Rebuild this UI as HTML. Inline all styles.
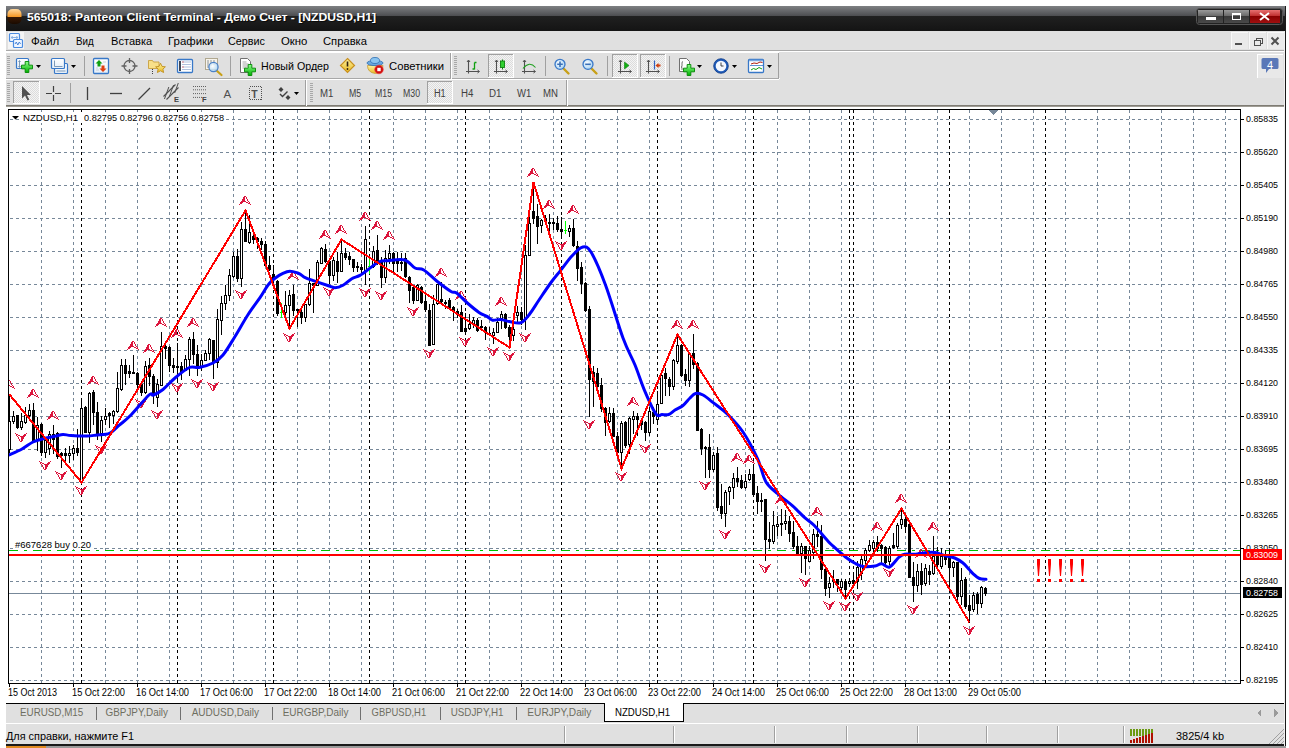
<!DOCTYPE html>
<html><head><meta charset="utf-8"><style>
html,body{margin:0;padding:0;background:#fff;}
body{width:1289px;height:748px;overflow:hidden;position:relative;font-family:"Liberation Sans",sans-serif;}
svg{position:absolute;left:0;top:0;-webkit-font-smoothing:antialiased;}
</style></head><body>
<svg width="1289" height="748" viewBox="0 0 1289 748" shape-rendering="crispEdges">
<defs>
<pattern id="chk" width="2" height="2" patternUnits="userSpaceOnUse"><rect width="2" height="2" fill="#F4F4F4"/><rect width="1" height="1" fill="#DCDCDC"/><rect x="1" y="1" width="1" height="1" fill="#DCDCDC"/></pattern>
<linearGradient id="tg" x1="0" y1="0" x2="0" y2="1"><stop offset="0" stop-color="#7E8083"/><stop offset="0.4" stop-color="#4C4D50"/><stop offset="0.42" stop-color="#202020"/><stop offset="1" stop-color="#141414"/></linearGradient>
<linearGradient id="bg1" x1="0" y1="0" x2="0" y2="1"><stop offset="0" stop-color="#9A9A9A"/><stop offset="0.45" stop-color="#6A6A6A"/><stop offset="0.5" stop-color="#3A3A3A"/><stop offset="1" stop-color="#4A4A4A"/></linearGradient>
<linearGradient id="bg2" x1="0" y1="0" x2="0" y2="1"><stop offset="0" stop-color="#E87070"/><stop offset="0.45" stop-color="#C03030"/><stop offset="0.5" stop-color="#8A0000"/><stop offset="1" stop-color="#A01010"/></linearGradient>
<linearGradient id="ico" x1="0" y1="0" x2="0" y2="1"><stop offset="0" stop-color="#FFD9A0"/><stop offset="0.5" stop-color="#F59A2A"/><stop offset="0.52" stop-color="#3A1A05"/><stop offset="1" stop-color="#1A0A00"/></linearGradient>
<linearGradient id="tbl" x1="0" y1="0" x2="0" y2="1"><stop offset="0" stop-color="#6E6B63"/><stop offset="1" stop-color="#B0ADA5"/></linearGradient>
</defs><rect x="6" y="6" width="1280" height="25" fill="url(#tg)" /><rect x="7.5" y="9" width="14" height="15" rx="5" fill="url(#ico)" shape-rendering="geometricPrecision"/><text x="27" y="21" textLength="349" lengthAdjust="spacingAndGlyphs" style="font-family:'Liberation Sans', sans-serif;font-size:11.5px;font-weight:bold;" fill="#000" transform="translate(1,1)" opacity="0.6">565018: Panteon Client Terminal - Демо Счет - [NZDUSD,H1]</text><text x="27" y="21" textLength="349" lengthAdjust="spacingAndGlyphs" style="font-family:'Liberation Sans', sans-serif;font-size:11.5px;font-weight:bold;" fill="#FFFFFF" >565018: Panteon Client Terminal - Демо Счет - [NZDUSD,H1]</text><rect x="1196.5" y="8.5" width="86" height="16" rx="3" fill="#222" stroke="#555" stroke-width="1" shape-rendering="geometricPrecision"/><rect x="1198" y="10" width="25" height="13" fill="url(#bg1)" /><rect x="1224" y="10" width="25" height="13" fill="url(#bg1)" /><rect x="1250" y="10" width="30" height="13" fill="url(#bg2)" /><rect x="1206" y="17" width="10" height="3" fill="#FFF" /><rect x="1232.5" y="13.5" width="8" height="6" fill="none" stroke="#FFF" stroke-width="1.2"/><rect x="1232" y="13" width="9" height="2" fill="#FFF" /><path d="M1260 13l9 7M1269 13l-9 7" stroke="#FFF" stroke-width="2" shape-rendering="geometricPrecision"/><rect x="6" y="31" width="1280" height="19" fill="#E0E0E0" /><rect x="6" y="50" width="1280" height="1" fill="#A8A8A8" /><rect x="6" y="51" width="1280" height="1" fill="#FFFFFF" /><rect x="8" y="32" width="16" height="17" fill="#F4F4F4" /><rect x="9.5" y="33.5" width="10" height="8" rx="1" fill="#F0F6FF" stroke="#4A8BE0" stroke-width="1.2" shape-rendering="geometricPrecision"/><path d="M11.5 37.5h6M12.5 36l-1 1.5 1 1.5M16.5 36l1 1.5-1 1.5" stroke="#6A9AD8" stroke-width="0.8" fill="none" shape-rendering="geometricPrecision"/><rect x="13.5" y="39.5" width="9" height="8" rx="1" fill="#F0F6FF" stroke="#4A8BE0" stroke-width="1.2" shape-rendering="geometricPrecision"/><path d="M15 44l1.3-2 1.5 3 1.5-3 1.3 2" stroke="#3A7BD5" stroke-width="0.9" fill="none" shape-rendering="geometricPrecision"/><text x="31" y="45" textLength="28.3" lengthAdjust="spacingAndGlyphs" style="font-family:'Liberation Sans', sans-serif;font-size:11px;" fill="#000" >Файл</text><text x="76" y="45" textLength="17.7" lengthAdjust="spacingAndGlyphs" style="font-family:'Liberation Sans', sans-serif;font-size:11px;" fill="#000" >Вид</text><text x="111" y="45" textLength="41.2" lengthAdjust="spacingAndGlyphs" style="font-family:'Liberation Sans', sans-serif;font-size:11px;" fill="#000" >Вставка</text><text x="168" y="45" textLength="45.5" lengthAdjust="spacingAndGlyphs" style="font-family:'Liberation Sans', sans-serif;font-size:11px;" fill="#000" >Графики</text><text x="228" y="45" textLength="37" lengthAdjust="spacingAndGlyphs" style="font-family:'Liberation Sans', sans-serif;font-size:11px;" fill="#000" >Сервис</text><text x="281" y="45" textLength="26.4" lengthAdjust="spacingAndGlyphs" style="font-family:'Liberation Sans', sans-serif;font-size:11px;" fill="#000" >Окно</text><text x="323" y="45" textLength="44" lengthAdjust="spacingAndGlyphs" style="font-family:'Liberation Sans', sans-serif;font-size:11px;" fill="#000" >Справка</text><rect x="1231" y="32" width="17" height="17" fill="#EAEAEA" /><rect x="1231" y="32" width="17" height="1" fill="#F8F8F8" /><rect x="1231" y="32" width="1" height="17" fill="#F8F8F8" /><rect x="1249" y="32" width="17" height="17" fill="#EAEAEA" /><rect x="1249" y="32" width="17" height="1" fill="#F8F8F8" /><rect x="1249" y="32" width="1" height="17" fill="#F8F8F8" /><rect x="1267" y="32" width="17" height="17" fill="#EAEAEA" /><rect x="1267" y="32" width="17" height="1" fill="#F8F8F8" /><rect x="1267" y="32" width="1" height="17" fill="#F8F8F8" /><rect x="1235" y="43" width="7" height="2" fill="#505050" /><path d="M1254.5 40.5h6v5h-6zM1256.5 40.5v-2h6v5h-2" fill="none" stroke="#505050" stroke-width="1"/><path d="M1271.5 37.5l7 7M1278.5 37.5l-7 7" stroke="#505050" stroke-width="2" shape-rendering="geometricPrecision"/><rect x="6" y="52" width="1280" height="53" fill="#E0E0E0" /><rect x="6" y="105" width="1280" height="2" fill="url(#tbl)" /><rect x="6" y="78" width="773" height="1" fill="#A8A8A8" /><rect x="6" y="79" width="773" height="1" fill="#FFFFFF" /><rect x="6" y="52" width="773" height="1" fill="#FFFFFF" /><rect x="450" y="53" width="1" height="25" fill="#A0A0A0" /><rect x="451" y="53" width="1" height="26" fill="#FFFFFF" /><rect x="778" y="53" width="1" height="25" fill="#A0A0A0" /><rect x="779" y="53" width="1" height="26" fill="#FFFFFF" /><rect x="779" y="52" width="507" height="26" fill="#E0E0E0" /><rect x="7" y="56" width="3" height="1" fill="#A8A8A8" /><rect x="7" y="58" width="3" height="1" fill="#A8A8A8" /><rect x="7" y="60" width="3" height="1" fill="#A8A8A8" /><rect x="7" y="62" width="3" height="1" fill="#A8A8A8" /><rect x="7" y="64" width="3" height="1" fill="#A8A8A8" /><rect x="7" y="66" width="3" height="1" fill="#A8A8A8" /><rect x="7" y="68" width="3" height="1" fill="#A8A8A8" /><rect x="7" y="70" width="3" height="1" fill="#A8A8A8" /><rect x="7" y="72" width="3" height="1" fill="#A8A8A8" /><rect x="7" y="74" width="3" height="1" fill="#A8A8A8" /><rect x="454" y="56" width="3" height="1" fill="#A8A8A8" /><rect x="454" y="58" width="3" height="1" fill="#A8A8A8" /><rect x="454" y="60" width="3" height="1" fill="#A8A8A8" /><rect x="454" y="62" width="3" height="1" fill="#A8A8A8" /><rect x="454" y="64" width="3" height="1" fill="#A8A8A8" /><rect x="454" y="66" width="3" height="1" fill="#A8A8A8" /><rect x="454" y="68" width="3" height="1" fill="#A8A8A8" /><rect x="454" y="70" width="3" height="1" fill="#A8A8A8" /><rect x="454" y="72" width="3" height="1" fill="#A8A8A8" /><rect x="454" y="74" width="3" height="1" fill="#A8A8A8" /><rect x="305" y="80" width="1" height="25" fill="#A0A0A0" /><rect x="306" y="80" width="1" height="26" fill="#FFFFFF" /><rect x="566" y="80" width="1" height="25" fill="#A0A0A0" /><rect x="567" y="80" width="1" height="26" fill="#FFFFFF" /><rect x="7" y="83" width="3" height="1" fill="#A8A8A8" /><rect x="7" y="85" width="3" height="1" fill="#A8A8A8" /><rect x="7" y="87" width="3" height="1" fill="#A8A8A8" /><rect x="7" y="89" width="3" height="1" fill="#A8A8A8" /><rect x="7" y="91" width="3" height="1" fill="#A8A8A8" /><rect x="7" y="93" width="3" height="1" fill="#A8A8A8" /><rect x="7" y="95" width="3" height="1" fill="#A8A8A8" /><rect x="7" y="97" width="3" height="1" fill="#A8A8A8" /><rect x="7" y="99" width="3" height="1" fill="#A8A8A8" /><rect x="7" y="101" width="3" height="1" fill="#A8A8A8" /><rect x="310" y="83" width="3" height="1" fill="#A8A8A8" /><rect x="310" y="85" width="3" height="1" fill="#A8A8A8" /><rect x="310" y="87" width="3" height="1" fill="#A8A8A8" /><rect x="310" y="89" width="3" height="1" fill="#A8A8A8" /><rect x="310" y="91" width="3" height="1" fill="#A8A8A8" /><rect x="310" y="93" width="3" height="1" fill="#A8A8A8" /><rect x="310" y="95" width="3" height="1" fill="#A8A8A8" /><rect x="310" y="97" width="3" height="1" fill="#A8A8A8" /><rect x="310" y="99" width="3" height="1" fill="#A8A8A8" /><rect x="310" y="101" width="3" height="1" fill="#A8A8A8" /><rect x="84" y="56" width="1" height="20" fill="#A0A0A0" /><rect x="230" y="56" width="1" height="20" fill="#A0A0A0" /><rect x="545" y="56" width="1" height="20" fill="#A0A0A0" /><rect x="607" y="56" width="1" height="20" fill="#A0A0A0" /><rect x="669" y="56" width="1" height="20" fill="#A0A0A0" /><rect x="70" y="83" width="1" height="20" fill="#A0A0A0" /><rect x="13" y="81" width="27" height="23" fill="url(#chk)" /><rect x="13" y="81" width="27" height="1" fill="#A0A0A0" /><rect x="13" y="81" width="1" height="23" fill="#A0A0A0" /><rect x="13" y="103" width="27" height="1" fill="#FFFFFF" /><rect x="39" y="81" width="1" height="23" fill="#FFFFFF" /><rect x="427" y="81" width="26" height="23" fill="url(#chk)" /><rect x="427" y="81" width="26" height="1" fill="#A0A0A0" /><rect x="427" y="81" width="1" height="23" fill="#A0A0A0" /><rect x="427" y="103" width="26" height="1" fill="#FFFFFF" /><rect x="452" y="81" width="1" height="23" fill="#FFFFFF" /><rect x="488" y="54" width="26" height="24" fill="url(#chk)" /><rect x="488" y="54" width="26" height="1" fill="#A0A0A0" /><rect x="488" y="54" width="1" height="24" fill="#A0A0A0" /><rect x="488" y="77" width="26" height="1" fill="#FFFFFF" /><rect x="513" y="54" width="1" height="24" fill="#FFFFFF" /><rect x="612" y="54" width="26" height="24" fill="url(#chk)" /><rect x="612" y="54" width="26" height="1" fill="#A0A0A0" /><rect x="612" y="54" width="1" height="24" fill="#A0A0A0" /><rect x="612" y="77" width="26" height="1" fill="#FFFFFF" /><rect x="637" y="54" width="1" height="24" fill="#FFFFFF" /><rect x="640" y="54" width="26" height="24" fill="url(#chk)" /><rect x="640" y="54" width="26" height="1" fill="#A0A0A0" /><rect x="640" y="54" width="1" height="24" fill="#A0A0A0" /><rect x="640" y="77" width="26" height="1" fill="#FFFFFF" /><rect x="665" y="54" width="1" height="24" fill="#FFFFFF" /><text x="261" y="70" textLength="68" lengthAdjust="spacingAndGlyphs" style="font-family:'Liberation Sans', sans-serif;font-size:11px;" fill="#000" >Новый Ордер</text><text x="389" y="70" textLength="55" lengthAdjust="spacingAndGlyphs" style="font-family:'Liberation Sans', sans-serif;font-size:11px;" fill="#000" >Советники</text><text x="320" y="97" textLength="13.4" lengthAdjust="spacingAndGlyphs" style="font-family:'Liberation Sans', sans-serif;font-size:10px;" fill="#404040" >M1</text><text x="349" y="97" textLength="12.2" lengthAdjust="spacingAndGlyphs" style="font-family:'Liberation Sans', sans-serif;font-size:10px;" fill="#404040" >M5</text><text x="375" y="97" textLength="17" lengthAdjust="spacingAndGlyphs" style="font-family:'Liberation Sans', sans-serif;font-size:10px;" fill="#404040" >M15</text><text x="403" y="97" textLength="17" lengthAdjust="spacingAndGlyphs" style="font-family:'Liberation Sans', sans-serif;font-size:10px;" fill="#404040" >M30</text><text x="434" y="97" textLength="11.7" lengthAdjust="spacingAndGlyphs" style="font-family:'Liberation Sans', sans-serif;font-size:10px;" fill="#404040" >H1</text><text x="461" y="97" textLength="12.4" lengthAdjust="spacingAndGlyphs" style="font-family:'Liberation Sans', sans-serif;font-size:10px;" fill="#404040" >H4</text><text x="489" y="97" textLength="12.5" lengthAdjust="spacingAndGlyphs" style="font-family:'Liberation Sans', sans-serif;font-size:10px;" fill="#404040" >D1</text><text x="517" y="97" textLength="14.3" lengthAdjust="spacingAndGlyphs" style="font-family:'Liberation Sans', sans-serif;font-size:10px;" fill="#404040" >W1</text><text x="543" y="97" textLength="15" lengthAdjust="spacingAndGlyphs" style="font-family:'Liberation Sans', sans-serif;font-size:10px;" fill="#404040" >MN</text><rect x="1257" y="54" width="26" height="24" fill="#E8E8E8" /><rect x="1257" y="54" width="26" height="1" fill="#FFFFFF" /><rect x="1257" y="54" width="1" height="24" fill="#FFFFFF" /><path d="M1263 58h14q1.5 0 1.5 1.5v8q0 1.5-1.5 1.5h-8l-3 4v-4h-3q-1.5 0-1.5-1.5v-8q0-1.5 1.5-1.5z" fill="#5A78B8" shape-rendering="geometricPrecision"/><text x="1270" y="69" style="font-family:'Liberation Sans', sans-serif;font-size:11px;" fill="#FFFFFF" text-anchor="middle">4</text><rect x="6" y="703" width="1280" height="1" fill="#000000" /><rect x="6" y="704" width="1280" height="19" fill="#E0E0E0" /><rect x="6" y="723" width="1280" height="1" fill="#FFFFFF" /><text x="20" y="716" textLength="63.3" lengthAdjust="spacingAndGlyphs" style="font-family:'Liberation Sans', sans-serif;font-size:11px;" fill="#6E6E60" >EURUSD,M15</text><text x="105.5" y="716" textLength="62.5" lengthAdjust="spacingAndGlyphs" style="font-family:'Liberation Sans', sans-serif;font-size:11px;" fill="#6E6E60" >GBPJPY,Daily</text><text x="191.7" y="716" textLength="67.3" lengthAdjust="spacingAndGlyphs" style="font-family:'Liberation Sans', sans-serif;font-size:11px;" fill="#6E6E60" >AUDUSD,Daily</text><text x="282.7" y="716" textLength="65.7" lengthAdjust="spacingAndGlyphs" style="font-family:'Liberation Sans', sans-serif;font-size:11px;" fill="#6E6E60" >EURGBP,Daily</text><text x="371.6" y="716" textLength="54.6" lengthAdjust="spacingAndGlyphs" style="font-family:'Liberation Sans', sans-serif;font-size:11px;" fill="#6E6E60" >GBPUSD,H1</text><text x="450.7" y="716" textLength="52.8" lengthAdjust="spacingAndGlyphs" style="font-family:'Liberation Sans', sans-serif;font-size:11px;" fill="#6E6E60" >USDJPY,H1</text><text x="527.3" y="716" textLength="64.1" lengthAdjust="spacingAndGlyphs" style="font-family:'Liberation Sans', sans-serif;font-size:11px;" fill="#6E6E60" >EURJPY,Daily</text><rect x="96" y="707" width="1" height="13" fill="#707070" /><rect x="180" y="707" width="1" height="13" fill="#707070" /><rect x="272" y="707" width="1" height="13" fill="#707070" /><rect x="360" y="707" width="1" height="13" fill="#707070" /><rect x="440" y="707" width="1" height="13" fill="#707070" /><rect x="516" y="707" width="1" height="13" fill="#707070" /><rect x="604" y="703" width="80" height="19" fill="#FFFFFF" /><rect x="604" y="703" width="1" height="19" fill="#000" /><rect x="683" y="703" width="1" height="19" fill="#000" /><rect x="604" y="721" width="80" height="1" fill="#000" /><text x="615" y="716" textLength="55.2" lengthAdjust="spacingAndGlyphs" style="font-family:'Liberation Sans', sans-serif;font-size:11px;" fill="#000" >NZDUSD,H1</text><path d="M1261 709v8l-4-4z" fill="#9A9A9A"/><path d="M1274 709v8l4-4z" fill="#9A9A9A"/><rect x="6" y="724" width="1280" height="20" fill="#E0E0E0" /><rect x="6" y="744" width="1280" height="2" fill="#1A1A1A" /><rect x="6" y="746" width="40" height="2" fill="#E08A20" /><rect x="46" y="746" width="1240" height="2" fill="#9A9A9A" /><text x="6" y="740" textLength="128" lengthAdjust="spacingAndGlyphs" style="font-family:'Liberation Sans', sans-serif;font-size:11px;" fill="#000" >Для справки, нажмите F1</text><rect x="564" y="726" width="1" height="17" fill="#A0A0A0" /><rect x="565" y="726" width="1" height="17" fill="#FFFFFF" /><rect x="673" y="726" width="1" height="17" fill="#A0A0A0" /><rect x="674" y="726" width="1" height="17" fill="#FFFFFF" /><rect x="774" y="726" width="1" height="17" fill="#A0A0A0" /><rect x="775" y="726" width="1" height="17" fill="#FFFFFF" /><rect x="846" y="726" width="1" height="17" fill="#A0A0A0" /><rect x="847" y="726" width="1" height="17" fill="#FFFFFF" /><rect x="917" y="726" width="1" height="17" fill="#A0A0A0" /><rect x="918" y="726" width="1" height="17" fill="#FFFFFF" /><rect x="986" y="726" width="1" height="17" fill="#A0A0A0" /><rect x="987" y="726" width="1" height="17" fill="#FFFFFF" /><rect x="1057" y="726" width="1" height="17" fill="#A0A0A0" /><rect x="1058" y="726" width="1" height="17" fill="#FFFFFF" /><rect x="1123" y="726" width="1" height="17" fill="#A0A0A0" /><rect x="1124" y="726" width="1" height="17" fill="#FFFFFF" /><rect x="1130" y="729" width="2" height="7" fill="#6A9A10" /><rect x="1130" y="740" width="2" height="3" fill="#B01000" /><rect x="1133" y="729" width="2" height="7" fill="#6A9A10" /><rect x="1133" y="739" width="2" height="4" fill="#B01000" /><rect x="1136" y="729" width="2" height="7" fill="#6A9A10" /><rect x="1136" y="738" width="2" height="5" fill="#B01000" /><rect x="1139" y="729" width="2" height="7" fill="#6A9A10" /><rect x="1139" y="737" width="2" height="6" fill="#B01000" /><rect x="1142" y="729" width="2" height="7" fill="#6A9A10" /><rect x="1142" y="736" width="2" height="7" fill="#B01000" /><rect x="1145" y="729" width="2" height="7" fill="#6A9A10" /><rect x="1145" y="735" width="2" height="8" fill="#B01000" /><rect x="1148" y="729" width="2" height="7" fill="#6A9A10" /><rect x="1148" y="734" width="2" height="9" fill="#B01000" /><rect x="1151" y="729" width="2" height="7" fill="#6A9A10" /><rect x="1151" y="733" width="2" height="10" fill="#B01000" /><text x="1176" y="740" textLength="48" lengthAdjust="spacingAndGlyphs" style="font-family:'Liberation Sans', sans-serif;font-size:11px;" fill="#000" >3825/4 kb</text><path d="M1284 729L1269 744M1284 733L1273 744M1284 737L1277 744M1284 741L1281 744" stroke="#A0A0A0" stroke-width="1" shape-rendering="geometricPrecision"/><rect x="1284" y="31" width="1" height="715" fill="#F0F0F0" /><rect x="1285" y="6" width="1" height="740" fill="#1A1A1A" />
<g shape-rendering="geometricPrecision"><defs>
<linearGradient id="gp" x1="0" y1="0" x2="0" y2="1"><stop offset="0" stop-color="#8CFF8C"/><stop offset="1" stop-color="#00B000"/></linearGradient>
<linearGradient id="gw" x1="0" y1="0" x2="0" y2="1"><stop offset="0" stop-color="#FFFFFF"/><stop offset="1" stop-color="#E4EEF8"/></linearGradient>
<radialGradient id="gmag" cx="0.4" cy="0.4" r="0.6"><stop offset="0" stop-color="#FFFFFF"/><stop offset="1" stop-color="#A8D4F4"/></radialGradient>
<linearGradient id="gy" x1="0" y1="0" x2="0" y2="1"><stop offset="0" stop-color="#FFF3A0"/><stop offset="1" stop-color="#E8B820"/></linearGradient>
</defs><rect x="16.5" y="58.5" width="12" height="10" rx="1" fill="url(#gw)" stroke="#3878C8" stroke-width="1.2"/><path d="M19.5 61v6M18.5 62l1-1.5 1 1.5M18.5 66l1 1.5 1-1.5" stroke="#7090B0" stroke-width="0.9" fill="none"/><path d="M25.166666666666668 61.5h3.6666666666666665v3.6666666666666665h3.6666666666666665v3.6666666666666665h-3.6666666666666665v3.6666666666666665h-3.6666666666666665v-3.6666666666666665h-3.6666666666666665v-3.6666666666666665h3.6666666666666665z" fill="url(#gp)" stroke="#008800" stroke-width="0.9"/><path d="M36 65h5l-2.5 3z" fill="#000"/><rect x="54.5" y="63.5" width="13" height="10" rx="1" fill="url(#gw)" stroke="#3878C8" stroke-width="1.2"/><rect x="51.5" y="58.5" width="13" height="10" rx="1" fill="url(#gw)" stroke="#3878C8" stroke-width="1.2"/><path d="M54.5 60.5v6h8M56.5 71h9" stroke="#7090B0" stroke-width="0.9" fill="none"/><path d="M71 65h5l-2.5 3z" fill="#000"/><rect x="93.5" y="58.5" width="15" height="15" rx="1" fill="url(#gw)" stroke="#3878C8" stroke-width="1.3"/><path d="M99 60l-3.5 3.5h2v3h3v-3h2z" fill="#10A010"/><path d="M103 72l3.5-3.5h-2v-3h-3v3h-2z" fill="#E04010"/><path d="M103 62h3M96 70h3M96 68h2" stroke="#C0C8D0" stroke-width="0.8"/><circle cx="129.5" cy="66" r="5.5" fill="none" stroke="#606060" stroke-width="1.3"/><path d="M129.5 58v5M129.5 69v5M121.5 66h5M132.5 66h5" stroke="#606060" stroke-width="1.3"/><path d="M148.5 60.5h4l1 1.5h5.5v6.5h-10.5z" fill="#F8E08A" stroke="#C8A040" stroke-width="0.9"/><path d="M160.5 63.2l1.5 3.2 3.4.4-2.5 2.3.7 3.4-3.1-1.7-3.1 1.7.7-3.4-2.5-2.3 3.4-.4z" fill="url(#gy)" stroke="#C09020" stroke-width="0.9"/><path d="M152.5 69v5" stroke="#404040" stroke-width="1" stroke-dasharray="1 1"/><rect x="177.5" y="59.5" width="15" height="13" rx="1" fill="#fff" stroke="#3878C8" stroke-width="1.3"/><path d="M180 61v10" stroke="#404858" stroke-width="2"/><path d="M182 62h9M182 64.5h9M182 67h9M182 69.5h9" stroke="#90A8D0" stroke-width="0.7"/><path d="M182.5 62h1M182.5 67h1" stroke="#E02020" stroke-width="1"/><rect x="205.5" y="58.5" width="12" height="11" fill="#F8F4EC" stroke="#B0A890" stroke-width="1"/><path d="M208 60v8M211 60v6M214 60v5" stroke="#808890" stroke-width="0.9"/><path d="M216.5 70.5l5 4.5" stroke="#C8A018" stroke-width="2.2" stroke-linecap="round"/><circle cx="213.5" cy="67" r="4.6" fill="url(#gmag)" fill-opacity="0.85" stroke="#4A80C8" stroke-width="1.2"/><path d="M240.5 58.5h7l3 3v11h-10z" fill="#fff" stroke="#707070" stroke-width="1"/><path d="M242.5 62h4M242.5 64h6M242.5 66h6M242.5 68h4" stroke="#909090" stroke-width="0.8"/><path d="M248.16666666666666 64.5h3.6666666666666665v3.6666666666666665h3.6666666666666665v3.6666666666666665h-3.6666666666666665v3.6666666666666665h-3.6666666666666665v-3.6666666666666665h-3.6666666666666665v-3.6666666666666665h3.6666666666666665z" fill="url(#gp)" stroke="#008800" stroke-width="0.9"/><path d="M347.5 58.5l7 7-7 7-7-7z" fill="url(#gy)" stroke="#C89020" stroke-width="1.2"/><path d="M347.5 61.5v5" stroke="#302010" stroke-width="1.6"/><circle cx="347.5" cy="69" r="0.9" fill="#302010"/><path d="M367.5 65.5q0 7 8 8q7-1 7.5-8z" fill="url(#gy)" stroke="#C8A040" stroke-width="0.9"/><ellipse cx="375" cy="63" rx="8" ry="2.6" fill="#6AA8E0" stroke="#3A78B8" stroke-width="0.9"/><ellipse cx="375" cy="60.5" rx="4.5" ry="3" fill="#8AC4F0" stroke="#3A78B8" stroke-width="0.9"/><circle cx="379" cy="69.5" r="4.3" fill="#D01010" stroke="#F04040" stroke-width="0.6"/><rect x="377.3" y="67.8" width="3.4" height="3.4" fill="#fff"/><path d="M468.5 60.5v13M466.0 71.5h13" stroke="#505050" stroke-width="1.1" fill="none"/><path d="M467.0 62.0l1.5-2 1.5 2M477.5 70.0l2 1.5-2 1.5" stroke="#505050" stroke-width="1" fill="none"/><path d="M472.5 69h2M474.5 69.5v-7M474.5 62.5h2" stroke="#10A010" stroke-width="1.3" fill="none"/><path d="M496.5 60.5v13M494.0 71.5h13" stroke="#505050" stroke-width="1.1" fill="none"/><path d="M495.0 62.0l1.5-2 1.5 2M505.5 70.0l2 1.5-2 1.5" stroke="#505050" stroke-width="1" fill="none"/><path d="M502.5 59.5v10" stroke="#108010" stroke-width="1"/><rect x="500.5" y="61" width="4" height="6.5" fill="#30D030" stroke="#108010" stroke-width="0.9"/><path d="M524.5 60.5v13M522.0 71.5h13" stroke="#505050" stroke-width="1.1" fill="none"/><path d="M523.0 62.0l1.5-2 1.5 2M533.5 70.0l2 1.5-2 1.5" stroke="#505050" stroke-width="1" fill="none"/><path d="M523 68.5q6.5-8 12.5-1" stroke="#20A020" stroke-width="1.1" fill="none"/><path d="M563.5 68.5l5 5" stroke="#C8A018" stroke-width="2.4" stroke-linecap="round"/><circle cx="560" cy="64.3" r="5" fill="url(#gmag)" stroke="#3A78C8" stroke-width="1.3"/><path d="M557.2 64.3h5.6M560 61.5v5.6" stroke="#3A70B8" stroke-width="1.6"/><path d="M591.5 68.5l5 5" stroke="#C8A018" stroke-width="2.4" stroke-linecap="round"/><circle cx="588" cy="64.3" r="5" fill="url(#gmag)" stroke="#3A78C8" stroke-width="1.3"/><path d="M585.2 64.3h5.6" stroke="#3A70B8" stroke-width="1.6"/><path d="M620.5 60.5v13M618.0 71.5h13" stroke="#505050" stroke-width="1.1" fill="none"/><path d="M619.0 62.0l1.5-2 1.5 2M629.5 70.0l2 1.5-2 1.5" stroke="#505050" stroke-width="1" fill="none"/><path d="M624.5 62v7l4.5-3.5z" fill="#10B010" stroke="#108010" stroke-width="0.6"/><path d="M648.5 60.5v13M646.0 71.5h13" stroke="#505050" stroke-width="1.1" fill="none"/><path d="M647.0 62.0l1.5-2 1.5 2M657.5 70.0l2 1.5-2 1.5" stroke="#505050" stroke-width="1" fill="none"/><path d="M654.5 60.5v9" stroke="#3060C0" stroke-width="1.2"/><path d="M655.5 65.5l3-2.5v1.5h2v2h-2v1.5z" fill="#D04010"/><path d="M679.5 58.5h7l3 3v10h-10z" fill="#fff" stroke="#707070" stroke-width="1"/><path d="M683 61.5q-1 0-1 1.5v3q0 1-1 1 1 0 1 1v2" stroke="#505050" stroke-width="0.8" fill="none"/><path d="M687.1666666666666 64.5h3.6666666666666665v3.6666666666666665h3.6666666666666665v3.6666666666666665h-3.6666666666666665v3.6666666666666665h-3.6666666666666665v-3.6666666666666665h-3.6666666666666665v-3.6666666666666665h3.6666666666666665z" fill="url(#gp)" stroke="#008800" stroke-width="0.9"/><path d="M697 65h5l-2.5 3z" fill="#000"/><circle cx="721" cy="66" r="7.3" fill="#1E5AB8" stroke="#0C3A88" stroke-width="0.8"/><circle cx="721" cy="66" r="5.3" fill="#F4F8FF"/><path d="M721 62.5v3.5h2.5" stroke="#303030" stroke-width="0.9" fill="none"/><path d="M732 65h5l-2.5 3z" fill="#000"/><rect x="748.5" y="59.5" width="15" height="13" rx="1" fill="#fff" stroke="#3878C8" stroke-width="1.3"/><path d="M749 60.5h14" stroke="#7AA8E0" stroke-width="1.5"/><path d="M750 65.5h14" stroke="#3878C8" stroke-width="0.8"/><path d="M751 64l3-1 3 .5 3-1.5 2.5.5" stroke="#B02010" stroke-width="1" fill="none"/><path d="M751 70l2.5-1.5 2.5 1 3-2 3 1.5" stroke="#10A010" stroke-width="1" fill="none"/><path d="M767 65h5l-2.5 3z" fill="#000"/><path d="M22 86v12.5l3-3 2.5 5 1.8-.9-2.4-4.6h4z" fill="#505050"/><path d="M53.5 86v6M53.5 95v6M46 93.5h6M55 93.5h6" stroke="#404040" stroke-width="1.2"/><path d="M87.5 87v13" stroke="#404040" stroke-width="1.3"/><path d="M110 93.5h12" stroke="#404040" stroke-width="1.3"/><path d="M138.5 99.5l11.5-11.5" stroke="#404040" stroke-width="1.2"/><path d="M163.5 96.5l12-12M166.5 99.5l12-12" stroke="#505050" stroke-width="1.1" fill="none"/><path d="M167.5 87v12M171.5 85v11M175.5 83v10" stroke="#505050" stroke-width="1" fill="none" transform="skewX(-20) translate(33 0)"/><text x="174" y="102" style="font-family:'Liberation Sans',sans-serif;font-size:7.5px;font-weight:bold" fill="#404040">E</text><path d="M193 86.5h13M193 89.8h13M193 93.6h13M193 97.4h9" stroke="#606060" stroke-width="1" stroke-dasharray="1 1"/><text x="202" y="102" style="font-family:'Liberation Sans',sans-serif;font-size:7.5px;font-weight:bold" fill="#404040">F</text><text x="223.5" y="97.5" style="font-family:'Liberation Sans',sans-serif;font-size:11.5px" fill="#505050">A</text><rect x="249.5" y="86.5" width="12" height="13" fill="none" stroke="#505050" stroke-width="1" stroke-dasharray="1 1" shape-rendering="crispEdges"/><text x="251.3" y="97.5" style="font-family:'Liberation Sans',sans-serif;font-size:10.5px;font-weight:bold" fill="#505050">T</text><path d="M281 87l2.5 2.5-2.5 2.5-2.5-2.5zM288 95l2.5 2.5-2.5 2.5-2.5-2.5z" fill="#404040"/><path d="M280 94l2.5 2.5 5-5" stroke="#404040" stroke-width="1.4" fill="none"/><path d="M294 92h5l-2.5 3z" fill="#000"/></g>
<rect x="6" y="107" width="1278" height="596" fill="#fff"/>
<defs><clipPath id="cc"><rect x="9" y="110" width="1231" height="573"/></clipPath></defs><g clip-path="url(#cc)"><path d="M10 119.5H1240M10 152.5H1240M10 185.5H1240M10 218.5H1240M10 251.5H1240M10 284.5H1240M10 317.5H1240M10 350.5H1240M10 383.5H1240M10 416.5H1240M10 449.5H1240M10 482.5H1240M10 515.5H1240M10 548.5H1240M10 581.5H1240M10 614.5H1240M10 647.5H1240M10 680.5H1240" stroke="#778899" stroke-width="1" stroke-dasharray="3 3" fill="none"/><path d="M41.5 110V683M73.5 110V683M105.5 110V683M137.5 110V683M169.5 110V683M201.5 110V683M233.5 110V683M265.5 110V683M297.5 110V683M329.5 110V683M361.5 110V683M393.5 110V683M425.5 110V683M457.5 110V683M489.5 110V683M521.5 110V683M553.5 110V683M585.5 110V683M617.5 110V683M649.5 110V683M681.5 110V683M713.5 110V683M745.5 110V683M777.5 110V683M809.5 110V683M841.5 110V683M873.5 110V683M905.5 110V683M937.5 110V683M969.5 110V683M1001.5 110V683M1033.5 110V683M1065.5 110V683M1097.5 110V683M1129.5 110V683M1161.5 110V683M1193.5 110V683M1225.5 110V683" stroke="#778899" stroke-width="1" stroke-dasharray="3 3" fill="none"/><path d="M81.5 110V683M177.5 110V683M273.5 110V683M369.5 110V683M465.5 110V683M561.5 110V683M657.5 110V683M753.5 110V683M849.5 110V683M853.5 110V683M949.5 110V683M1045.5 110V683" stroke="#000" stroke-width="1" stroke-dasharray="3 3" fill="none"/><path d="M9 593.5H1240" stroke="#778899" stroke-width="1"/><path d="M9 550.5H1240" stroke="#00C000" stroke-width="1" stroke-dasharray="9 6 3 6"/><path d="M9 394h1v59h-1zM8 421h3v29h-3zM13 411h1v13h-1zM12 416h3v6h-3zM17 415h1v14h-1zM16 415h3v13h-3zM21 413h1v17h-1zM20 421h3v7h-3zM25 407h1v17h-1zM24 415h3v8h-3zM29 404h1v13h-1zM28 410h3v6h-3zM33 403h1v38h-1zM32 410h3v31h-3zM37 417h1v34h-1zM36 425h3v15h-3zM41 423h1v33h-1zM40 424h3v29h-3zM45 439h1v19h-1zM44 440h3v13h-3zM49 431h1v24h-1zM48 434h3v15h-3zM53 425h1v29h-1zM52 434h3v6h-3zM57 432h1v27h-1zM56 433h3v24h-3zM61 452h1v16h-1zM60 453h3v3h-3zM65 448h1v16h-1zM64 453h3v3h-3zM69 446h1v17h-1zM68 453h3v3h-3zM73 445h1v15h-1zM72 448h3v6h-3zM77 429h1v27h-1zM76 448h3v5h-3zM81 401h1v82h-1zM80 408h3v74h-3zM85 406h1v27h-1zM84 407h3v26h-3zM89 392h1v51h-1zM88 393h3v40h-3zM93 390h1v35h-1zM92 392h3v21h-3zM97 402h1v38h-1zM96 412h3v23h-3zM101 416h1v26h-1zM100 420h3v14h-3zM105 408h1v17h-1zM104 416h3v4h-3zM109 412h1v16h-1zM108 413h3v3h-3zM113 410h1v14h-1zM112 411h3v5h-3zM117 372h1v41h-1zM116 388h3v24h-3zM121 359h1v32h-1zM120 365h3v25h-3zM125 359h1v26h-1zM124 365h3v9h-3zM129 365h1v13h-1zM128 371h3v3h-3zM133 355h1v19h-1zM132 372h3v2h-3zM137 372h1v17h-1zM136 373h3v12h-3zM141 382h1v14h-1zM140 384h3v9h-3zM145 361h1v33h-1zM144 366h3v27h-3zM149 358h1v28h-1zM148 365h3v12h-3zM153 374h1v30h-1zM152 376h3v18h-3zM157 379h1v28h-1zM156 384h3v14h-3zM161 332h1v54h-1zM160 346h3v40h-3zM165 344h1v15h-1zM164 346h3v3h-3zM169 346h1v26h-1zM168 347h3v19h-3zM173 358h1v15h-1zM172 365h3v3h-3zM177 343h1v37h-1zM176 366h3v2h-3zM181 362h1v18h-1zM180 366h3v6h-3zM185 355h1v16h-1zM184 359h3v12h-3zM189 337h1v39h-1zM188 339h3v21h-3zM193 332h1v32h-1zM192 339h3v16h-3zM197 345h1v31h-1zM196 354h3v15h-3zM201 354h1v17h-1zM200 360h3v8h-3zM205 350h1v11h-1zM204 353h3v8h-3zM209 338h1v22h-1zM208 339h3v15h-3zM213 340h1v39h-1zM212 340h3v22h-3zM217 309h1v59h-1zM216 319h3v44h-3zM221 296h1v39h-1zM220 303h3v18h-3zM225 285h1v25h-1zM224 295h3v9h-3zM229 269h1v32h-1zM228 275h3v21h-3zM233 252h1v26h-1zM232 256h3v21h-3zM237 249h1v33h-1zM236 256h3v23h-3zM241 222h1v65h-1zM240 229h3v50h-3zM245 210h1v32h-1zM244 229h3v13h-3zM249 215h1v29h-1zM248 232h3v11h-3zM253 233h1v11h-1zM252 236h3v4h-3zM257 237h1v12h-1zM256 238h3v4h-3zM261 238h1v12h-1zM260 241h3v4h-3zM265 241h1v26h-1zM264 244h3v22h-3zM269 256h1v15h-1zM268 265h3v5h-3zM273 265h1v18h-1zM272 274h3v5h-3zM277 280h1v36h-1zM276 281h3v33h-3zM285 291h1v25h-1zM284 305h3v8h-3zM289 290h1v40h-1zM288 295h3v11h-3zM293 285h1v31h-1zM292 294h3v17h-3zM297 309h1v18h-1zM296 309h3v2h-3zM301 309h1v15h-1zM300 312h3v6h-3zM305 304h1v18h-1zM304 304h3v14h-3zM309 269h1v37h-1zM308 283h3v22h-3zM313 283h1v30h-1zM312 283h3v3h-3zM317 260h1v26h-1zM316 262h3v24h-3zM321 247h1v17h-1zM320 248h3v16h-3zM325 244h1v19h-1zM324 249h3v13h-3zM329 260h1v24h-1zM328 261h3v15h-3zM333 257h1v24h-1zM332 260h3v16h-3zM337 252h1v31h-1zM336 261h3v11h-3zM341 239h1v33h-1zM340 253h3v19h-3zM345 248h1v12h-1zM344 253h3v5h-3zM349 252h1v13h-1zM348 256h3v4h-3zM353 259h1v13h-1zM352 259h3v9h-3zM357 262h1v10h-1zM356 266h3v2h-3zM361 264h1v9h-1zM360 267h3v3h-3zM365 226h1v59h-1zM364 239h3v32h-3zM373 246h1v22h-1zM372 251h3v16h-3zM377 235h1v30h-1zM376 250h3v12h-3zM381 257h1v31h-1zM380 261h3v17h-3zM385 250h1v33h-1zM384 258h3v20h-3zM389 245h1v19h-1zM388 253h3v6h-3zM393 252h1v20h-1zM392 253h3v11h-3zM397 252h1v20h-1zM396 261h3v3h-3zM401 253h1v18h-1zM400 262h3v2h-3zM405 253h1v25h-1zM404 258h3v19h-3zM409 276h1v27h-1zM408 277h3v14h-3zM413 285h1v19h-1zM412 287h3v14h-3zM417 284h1v17h-1zM416 285h3v16h-3zM421 286h1v18h-1zM420 287h3v16h-3zM425 295h1v17h-1zM424 301h3v9h-3zM429 304h1v42h-1zM428 310h3v36h-3zM433 295h1v50h-1zM432 304h3v41h-3zM437 284h1v21h-1zM436 284h3v20h-3zM441 282h1v21h-1zM440 299h3v3h-3zM445 300h1v9h-1zM444 302h3v2h-3zM449 298h1v11h-1zM448 300h3v8h-3zM453 306h1v15h-1zM452 307h3v5h-3zM457 309h1v9h-1zM456 311h3v3h-3zM461 305h1v27h-1zM460 312h3v20h-3zM465 313h1v21h-1zM464 328h3v4h-3zM469 314h1v16h-1zM468 324h3v5h-3zM473 317h1v11h-1zM472 320h3v4h-3zM477 318h1v14h-1zM476 320h3v11h-3zM481 320h1v9h-1zM480 326h3v2h-3zM485 326h1v14h-1zM484 327h3v6h-3zM489 327h1v9h-1zM488 333h3v2h-3zM493 328h1v16h-1zM492 332h3v4h-3zM497 318h1v15h-1zM496 322h3v11h-3zM501 311h1v18h-1zM500 314h3v5h-3zM505 313h1v16h-1zM504 314h3v14h-3zM509 325h1v24h-1zM508 327h3v10h-3zM513 315h1v26h-1zM512 329h3v7h-3zM517 306h1v18h-1zM516 312h3v4h-3zM521 307h1v18h-1zM520 312h3v8h-3zM525 245h1v85h-1zM524 255h3v65h-3zM529 211h1v45h-1zM528 223h3v33h-3zM533 182h1v42h-1zM532 211h3v8h-3zM537 204h1v40h-1zM536 216h3v11h-3zM541 219h1v14h-1zM540 220h3v6h-3zM545 215h1v7h-1zM544 218h3v3h-3zM549 214h1v18h-1zM548 222h3v2h-3zM553 218h1v12h-1zM552 222h3v2h-3zM557 216h1v16h-1zM556 223h3v7h-3zM561 217h1v21h-1zM560 229h3v3h-3zM569 225h1v12h-1zM568 228h3v4h-3zM573 219h1v28h-1zM572 228h3v18h-3zM577 241h1v40h-1zM576 246h3v23h-3zM581 262h1v32h-1zM580 267h3v17h-3zM585 282h1v30h-1zM584 283h3v28h-3zM589 306h1v111h-1zM588 309h3v71h-3zM593 366h1v41h-1zM592 372h3v10h-3zM597 368h1v19h-1zM596 373h3v14h-3zM601 378h1v34h-1zM600 385h3v24h-3zM605 407h1v29h-1zM604 408h3v15h-3zM609 407h1v16h-1zM608 413h3v9h-3zM613 408h1v29h-1zM612 413h3v24h-3zM617 432h1v21h-1zM616 436h3v17h-3zM621 421h1v48h-1zM620 423h3v30h-3zM625 421h1v27h-1zM624 422h3v24h-3zM629 417h1v37h-1zM628 418h3v27h-3zM633 411h1v23h-1zM632 416h3v4h-3zM637 413h1v23h-1zM636 416h3v4h-3zM641 419h1v11h-1zM640 421h3v4h-3zM645 421h1v20h-1zM644 422h3v11h-3zM649 407h1v29h-1zM648 411h3v22h-3zM653 407h1v17h-1zM652 412h3v5h-3zM657 391h1v33h-1zM656 404h3v16h-3zM661 374h1v30h-1zM660 375h3v29h-3zM665 368h1v28h-1zM664 373h3v6h-3zM669 377h1v19h-1zM668 379h3v8h-3zM673 359h1v31h-1zM672 360h3v27h-3zM677 334h1v30h-1zM676 345h3v17h-3zM681 344h1v33h-1zM680 345h3v31h-3zM685 369h1v17h-1zM684 374h3v7h-3zM689 353h1v34h-1zM688 353h3v28h-3zM693 334h1v35h-1zM692 353h3v12h-3zM697 362h1v69h-1zM696 363h3v68h-3zM701 428h1v27h-1zM700 429h3v20h-3zM705 446h1v32h-1zM704 447h3v2h-3zM709 434h1v44h-1zM708 447h3v23h-3zM713 452h1v20h-1zM712 455h3v15h-3zM717 447h1v64h-1zM716 453h3v55h-3zM721 484h1v35h-1zM720 506h3v8h-3zM725 490h1v37h-1zM724 492h3v22h-3zM729 486h1v19h-1zM728 487h3v5h-3zM733 473h1v26h-1zM732 478h3v10h-3zM737 467h1v20h-1zM736 478h3v4h-3zM741 475h1v14h-1zM740 480h3v8h-3zM745 474h1v15h-1zM744 481h3v7h-3zM749 469h1v12h-1zM748 474h3v6h-3zM753 465h1v30h-1zM752 474h3v21h-3zM757 486h1v28h-1zM756 493h3v9h-3zM761 493h1v19h-1zM760 500h3v2h-3zM765 499h1v62h-1zM764 499h3v41h-3zM769 522h1v27h-1zM768 539h3v3h-3zM773 511h1v33h-1zM772 525h3v17h-3zM777 516h1v20h-1zM776 524h3v3h-3zM781 509h1v27h-1zM780 523h3v2h-3zM785 510h1v20h-1zM784 521h3v3h-3zM789 516h1v26h-1zM788 521h3v13h-3zM793 521h1v28h-1zM792 532h3v15h-3zM797 536h1v19h-1zM796 546h3v9h-3zM801 543h1v30h-1zM800 546h3v8h-3zM805 546h1v29h-1zM804 546h3v13h-3zM809 546h1v16h-1zM808 550h3v12h-3zM813 529h1v30h-1zM812 534h3v19h-3zM817 521h1v26h-1zM816 534h3v3h-3zM821 525h1v54h-1zM820 536h3v34h-3zM825 568h1v28h-1zM824 569h3v20h-3zM829 577h1v21h-1zM828 583h3v5h-3zM833 570h1v18h-1zM832 579h3v3h-3zM837 579h1v13h-1zM836 579h3v6h-3zM841 579h1v13h-1zM840 581h3v7h-3zM845 579h1v20h-1zM844 581h3v9h-3zM849 579h1v6h-1zM848 581h3v3h-3zM853 575h1v13h-1zM852 580h3v4h-3zM857 561h1v28h-1zM856 567h3v15h-3zM861 556h1v24h-1zM860 559h3v15h-3zM865 548h1v18h-1zM864 550h3v11h-3zM869 540h1v12h-1zM868 545h3v6h-3zM873 540h1v13h-1zM872 542h3v7h-3zM877 536h1v16h-1zM876 542h3v7h-3zM881 544h1v21h-1zM880 545h3v4h-3zM885 546h1v19h-1zM884 547h3v16h-3zM889 546h1v19h-1zM888 548h3v14h-3zM893 533h1v16h-1zM892 545h3v3h-3zM897 523h1v26h-1zM896 525h3v22h-3zM901 508h1v21h-1zM900 519h3v6h-3zM905 517h1v16h-1zM904 519h3v8h-3zM909 524h1v54h-1zM908 524h3v54h-3zM913 562h1v40h-1zM912 577h3v9h-3zM917 564h1v28h-1zM916 571h3v15h-3zM921 563h1v32h-1zM920 571h3v14h-3zM925 564h1v22h-1zM924 568h3v16h-3zM929 565h1v20h-1zM928 571h3v4h-3zM933 536h1v39h-1zM932 556h3v18h-3zM937 547h1v20h-1zM936 553h3v12h-3zM941 548h1v21h-1zM940 556h3v11h-3zM945 550h1v15h-1zM944 556h3v4h-3zM949 548h1v39h-1zM948 557h3v11h-3zM953 561h1v16h-1zM952 562h3v6h-3zM957 562h1v39h-1zM956 562h3v35h-3zM961 568h1v37h-1zM960 580h3v17h-3zM965 577h1v32h-1zM964 579h3v28h-3zM969 595h1v28h-1zM968 605h3v6h-3zM973 592h1v20h-1zM972 595h3v15h-3zM977 592h1v22h-1zM976 594h3v10h-3zM981 586h1v22h-1zM980 587h3v17h-3zM985 587h1v9h-1zM984 588h3v6h-3z" fill="#000"/><path d="M9 422h1v27h-1zM13 417h1v4h-1zM21 422h1v5h-1zM25 416h1v6h-1zM29 411h1v4h-1zM37 426h1v13h-1zM45 441h1v11h-1zM49 435h1v13h-1zM69 454h1v1h-1zM73 449h1v4h-1zM81 409h1v72h-1zM89 394h1v38h-1zM101 421h1v12h-1zM105 417h1v2h-1zM113 412h1v3h-1zM117 389h1v22h-1zM121 366h1v23h-1zM145 367h1v25h-1zM157 385h1v12h-1zM161 347h1v38h-1zM185 360h1v10h-1zM189 340h1v19h-1zM201 361h1v6h-1zM205 354h1v6h-1zM209 340h1v13h-1zM217 320h1v42h-1zM221 304h1v16h-1zM225 296h1v7h-1zM229 276h1v19h-1zM233 257h1v19h-1zM241 230h1v48h-1zM249 233h1v9h-1zM285 306h1v6h-1zM289 296h1v9h-1zM305 305h1v12h-1zM309 284h1v20h-1zM317 263h1v22h-1zM321 249h1v14h-1zM333 261h1v14h-1zM341 254h1v17h-1zM365 240h1v30h-1zM373 252h1v14h-1zM385 259h1v18h-1zM389 254h1v4h-1zM417 286h1v14h-1zM433 305h1v39h-1zM437 285h1v18h-1zM469 325h1v3h-1zM473 321h1v2h-1zM493 333h1v2h-1zM497 323h1v9h-1zM501 315h1v3h-1zM513 330h1v5h-1zM517 313h1v2h-1zM525 256h1v63h-1zM529 224h1v31h-1zM541 221h1v4h-1zM569 229h1v2h-1zM609 414h1v7h-1zM621 424h1v28h-1zM629 419h1v25h-1zM633 417h1v2h-1zM649 412h1v20h-1zM657 405h1v14h-1zM661 376h1v27h-1zM673 361h1v25h-1zM677 346h1v15h-1zM689 354h1v26h-1zM713 456h1v13h-1zM725 493h1v20h-1zM729 488h1v3h-1zM733 479h1v8h-1zM745 482h1v5h-1zM749 475h1v4h-1zM773 526h1v15h-1zM777 525h1v1h-1zM785 522h1v1h-1zM801 547h1v6h-1zM809 551h1v10h-1zM813 535h1v17h-1zM829 584h1v3h-1zM833 580h1v1h-1zM841 582h1v5h-1zM849 582h1v1h-1zM857 568h1v13h-1zM861 560h1v13h-1zM865 551h1v9h-1zM869 546h1v4h-1zM873 543h1v5h-1zM889 549h1v12h-1zM897 526h1v20h-1zM901 520h1v4h-1zM917 572h1v13h-1zM925 569h1v14h-1zM933 557h1v16h-1zM941 557h1v9h-1zM953 563h1v4h-1zM961 581h1v15h-1zM973 596h1v13h-1zM981 588h1v15h-1z" fill="#fff"/><path d="M281 303h1v15h-1zM280 312h3v1h-3zM369 259h1v15h-1zM368 266h3v1h-3zM565 221h1v13h-1zM564 230h3v1h-3z" fill="#00FF00"/><path d="M8 380h1v1h-1zM9 380h1v1h-1zM7 381h1v1h-1zM8 381h1v1h-1zM10 381h1v1h-1zM7 382h1v1h-1zM8 382h1v1h-1zM10 382h1v1h-1zM6 383h1v1h-1zM7 383h1v1h-1zM8 383h1v1h-1zM11 383h1v1h-1zM6 384h1v1h-1zM7 384h1v1h-1zM8 384h1v1h-1zM11 384h1v1h-1zM5 385h1v1h-1zM6 385h1v1h-1zM7 385h1v1h-1zM8 385h1v1h-1zM9 385h1v1h-1zM12 385h1v1h-1zM4 386h1v1h-1zM5 386h1v1h-1zM6 386h1v1h-1zM10 386h1v1h-1zM11 386h1v1h-1zM13 386h1v1h-1zM4 387h1v1h-1zM5 387h1v1h-1zM12 387h1v1h-1zM13 387h1v1h-1zM3 388h1v1h-1zM14 388h1v1h-1zM32 389h1v1h-1zM33 389h1v1h-1zM31 390h1v1h-1zM32 390h1v1h-1zM34 390h1v1h-1zM31 391h1v1h-1zM32 391h1v1h-1zM34 391h1v1h-1zM30 392h1v1h-1zM31 392h1v1h-1zM32 392h1v1h-1zM35 392h1v1h-1zM30 393h1v1h-1zM31 393h1v1h-1zM32 393h1v1h-1zM35 393h1v1h-1zM29 394h1v1h-1zM30 394h1v1h-1zM31 394h1v1h-1zM32 394h1v1h-1zM33 394h1v1h-1zM36 394h1v1h-1zM28 395h1v1h-1zM29 395h1v1h-1zM30 395h1v1h-1zM34 395h1v1h-1zM35 395h1v1h-1zM37 395h1v1h-1zM28 396h1v1h-1zM29 396h1v1h-1zM36 396h1v1h-1zM37 396h1v1h-1zM27 397h1v1h-1zM38 397h1v1h-1zM52 411h1v1h-1zM53 411h1v1h-1zM51 412h1v1h-1zM52 412h1v1h-1zM54 412h1v1h-1zM51 413h1v1h-1zM52 413h1v1h-1zM54 413h1v1h-1zM50 414h1v1h-1zM51 414h1v1h-1zM52 414h1v1h-1zM55 414h1v1h-1zM50 415h1v1h-1zM51 415h1v1h-1zM52 415h1v1h-1zM55 415h1v1h-1zM49 416h1v1h-1zM50 416h1v1h-1zM51 416h1v1h-1zM52 416h1v1h-1zM53 416h1v1h-1zM56 416h1v1h-1zM48 417h1v1h-1zM49 417h1v1h-1zM50 417h1v1h-1zM54 417h1v1h-1zM55 417h1v1h-1zM57 417h1v1h-1zM48 418h1v1h-1zM49 418h1v1h-1zM56 418h1v1h-1zM57 418h1v1h-1zM47 419h1v1h-1zM58 419h1v1h-1zM92 376h1v1h-1zM93 376h1v1h-1zM91 377h1v1h-1zM92 377h1v1h-1zM94 377h1v1h-1zM91 378h1v1h-1zM92 378h1v1h-1zM94 378h1v1h-1zM90 379h1v1h-1zM91 379h1v1h-1zM92 379h1v1h-1zM95 379h1v1h-1zM90 380h1v1h-1zM91 380h1v1h-1zM92 380h1v1h-1zM95 380h1v1h-1zM89 381h1v1h-1zM90 381h1v1h-1zM91 381h1v1h-1zM92 381h1v1h-1zM93 381h1v1h-1zM96 381h1v1h-1zM88 382h1v1h-1zM89 382h1v1h-1zM90 382h1v1h-1zM94 382h1v1h-1zM95 382h1v1h-1zM97 382h1v1h-1zM88 383h1v1h-1zM89 383h1v1h-1zM96 383h1v1h-1zM97 383h1v1h-1zM87 384h1v1h-1zM98 384h1v1h-1zM132 341h1v1h-1zM133 341h1v1h-1zM131 342h1v1h-1zM132 342h1v1h-1zM134 342h1v1h-1zM131 343h1v1h-1zM132 343h1v1h-1zM134 343h1v1h-1zM130 344h1v1h-1zM131 344h1v1h-1zM132 344h1v1h-1zM135 344h1v1h-1zM130 345h1v1h-1zM131 345h1v1h-1zM132 345h1v1h-1zM135 345h1v1h-1zM129 346h1v1h-1zM130 346h1v1h-1zM131 346h1v1h-1zM132 346h1v1h-1zM133 346h1v1h-1zM136 346h1v1h-1zM128 347h1v1h-1zM129 347h1v1h-1zM130 347h1v1h-1zM134 347h1v1h-1zM135 347h1v1h-1zM137 347h1v1h-1zM128 348h1v1h-1zM129 348h1v1h-1zM136 348h1v1h-1zM137 348h1v1h-1zM127 349h1v1h-1zM138 349h1v1h-1zM148 344h1v1h-1zM149 344h1v1h-1zM147 345h1v1h-1zM148 345h1v1h-1zM150 345h1v1h-1zM147 346h1v1h-1zM148 346h1v1h-1zM150 346h1v1h-1zM146 347h1v1h-1zM147 347h1v1h-1zM148 347h1v1h-1zM151 347h1v1h-1zM146 348h1v1h-1zM147 348h1v1h-1zM148 348h1v1h-1zM151 348h1v1h-1zM145 349h1v1h-1zM146 349h1v1h-1zM147 349h1v1h-1zM148 349h1v1h-1zM149 349h1v1h-1zM152 349h1v1h-1zM144 350h1v1h-1zM145 350h1v1h-1zM146 350h1v1h-1zM150 350h1v1h-1zM151 350h1v1h-1zM153 350h1v1h-1zM144 351h1v1h-1zM145 351h1v1h-1zM152 351h1v1h-1zM153 351h1v1h-1zM143 352h1v1h-1zM154 352h1v1h-1zM160 318h1v1h-1zM161 318h1v1h-1zM159 319h1v1h-1zM160 319h1v1h-1zM162 319h1v1h-1zM159 320h1v1h-1zM160 320h1v1h-1zM162 320h1v1h-1zM158 321h1v1h-1zM159 321h1v1h-1zM160 321h1v1h-1zM163 321h1v1h-1zM158 322h1v1h-1zM159 322h1v1h-1zM160 322h1v1h-1zM163 322h1v1h-1zM157 323h1v1h-1zM158 323h1v1h-1zM159 323h1v1h-1zM160 323h1v1h-1zM161 323h1v1h-1zM164 323h1v1h-1zM156 324h1v1h-1zM157 324h1v1h-1zM158 324h1v1h-1zM162 324h1v1h-1zM163 324h1v1h-1zM165 324h1v1h-1zM156 325h1v1h-1zM157 325h1v1h-1zM164 325h1v1h-1zM165 325h1v1h-1zM155 326h1v1h-1zM166 326h1v1h-1zM176 329h1v1h-1zM177 329h1v1h-1zM175 330h1v1h-1zM176 330h1v1h-1zM178 330h1v1h-1zM175 331h1v1h-1zM176 331h1v1h-1zM178 331h1v1h-1zM174 332h1v1h-1zM175 332h1v1h-1zM176 332h1v1h-1zM179 332h1v1h-1zM174 333h1v1h-1zM175 333h1v1h-1zM176 333h1v1h-1zM179 333h1v1h-1zM173 334h1v1h-1zM174 334h1v1h-1zM175 334h1v1h-1zM176 334h1v1h-1zM177 334h1v1h-1zM180 334h1v1h-1zM172 335h1v1h-1zM173 335h1v1h-1zM174 335h1v1h-1zM178 335h1v1h-1zM179 335h1v1h-1zM181 335h1v1h-1zM172 336h1v1h-1zM173 336h1v1h-1zM180 336h1v1h-1zM181 336h1v1h-1zM171 337h1v1h-1zM182 337h1v1h-1zM192 318h1v1h-1zM193 318h1v1h-1zM191 319h1v1h-1zM192 319h1v1h-1zM194 319h1v1h-1zM191 320h1v1h-1zM192 320h1v1h-1zM194 320h1v1h-1zM190 321h1v1h-1zM191 321h1v1h-1zM192 321h1v1h-1zM195 321h1v1h-1zM190 322h1v1h-1zM191 322h1v1h-1zM192 322h1v1h-1zM195 322h1v1h-1zM189 323h1v1h-1zM190 323h1v1h-1zM191 323h1v1h-1zM192 323h1v1h-1zM193 323h1v1h-1zM196 323h1v1h-1zM188 324h1v1h-1zM189 324h1v1h-1zM190 324h1v1h-1zM194 324h1v1h-1zM195 324h1v1h-1zM197 324h1v1h-1zM188 325h1v1h-1zM189 325h1v1h-1zM196 325h1v1h-1zM197 325h1v1h-1zM187 326h1v1h-1zM198 326h1v1h-1zM244 196h1v1h-1zM245 196h1v1h-1zM243 197h1v1h-1zM244 197h1v1h-1zM246 197h1v1h-1zM243 198h1v1h-1zM244 198h1v1h-1zM246 198h1v1h-1zM242 199h1v1h-1zM243 199h1v1h-1zM244 199h1v1h-1zM247 199h1v1h-1zM242 200h1v1h-1zM243 200h1v1h-1zM244 200h1v1h-1zM247 200h1v1h-1zM241 201h1v1h-1zM242 201h1v1h-1zM243 201h1v1h-1zM244 201h1v1h-1zM245 201h1v1h-1zM248 201h1v1h-1zM240 202h1v1h-1zM241 202h1v1h-1zM242 202h1v1h-1zM246 202h1v1h-1zM247 202h1v1h-1zM249 202h1v1h-1zM240 203h1v1h-1zM241 203h1v1h-1zM248 203h1v1h-1zM249 203h1v1h-1zM239 204h1v1h-1zM250 204h1v1h-1zM292 271h1v1h-1zM293 271h1v1h-1zM291 272h1v1h-1zM292 272h1v1h-1zM294 272h1v1h-1zM291 273h1v1h-1zM292 273h1v1h-1zM294 273h1v1h-1zM290 274h1v1h-1zM291 274h1v1h-1zM292 274h1v1h-1zM295 274h1v1h-1zM290 275h1v1h-1zM291 275h1v1h-1zM292 275h1v1h-1zM295 275h1v1h-1zM289 276h1v1h-1zM290 276h1v1h-1zM291 276h1v1h-1zM292 276h1v1h-1zM293 276h1v1h-1zM296 276h1v1h-1zM288 277h1v1h-1zM289 277h1v1h-1zM290 277h1v1h-1zM294 277h1v1h-1zM295 277h1v1h-1zM297 277h1v1h-1zM288 278h1v1h-1zM289 278h1v1h-1zM296 278h1v1h-1zM297 278h1v1h-1zM287 279h1v1h-1zM298 279h1v1h-1zM324 230h1v1h-1zM325 230h1v1h-1zM323 231h1v1h-1zM324 231h1v1h-1zM326 231h1v1h-1zM323 232h1v1h-1zM324 232h1v1h-1zM326 232h1v1h-1zM322 233h1v1h-1zM323 233h1v1h-1zM324 233h1v1h-1zM327 233h1v1h-1zM322 234h1v1h-1zM323 234h1v1h-1zM324 234h1v1h-1zM327 234h1v1h-1zM321 235h1v1h-1zM322 235h1v1h-1zM323 235h1v1h-1zM324 235h1v1h-1zM325 235h1v1h-1zM328 235h1v1h-1zM320 236h1v1h-1zM321 236h1v1h-1zM322 236h1v1h-1zM326 236h1v1h-1zM327 236h1v1h-1zM329 236h1v1h-1zM320 237h1v1h-1zM321 237h1v1h-1zM328 237h1v1h-1zM329 237h1v1h-1zM319 238h1v1h-1zM330 238h1v1h-1zM340 225h1v1h-1zM341 225h1v1h-1zM339 226h1v1h-1zM340 226h1v1h-1zM342 226h1v1h-1zM339 227h1v1h-1zM340 227h1v1h-1zM342 227h1v1h-1zM338 228h1v1h-1zM339 228h1v1h-1zM340 228h1v1h-1zM343 228h1v1h-1zM338 229h1v1h-1zM339 229h1v1h-1zM340 229h1v1h-1zM343 229h1v1h-1zM337 230h1v1h-1zM338 230h1v1h-1zM339 230h1v1h-1zM340 230h1v1h-1zM341 230h1v1h-1zM344 230h1v1h-1zM336 231h1v1h-1zM337 231h1v1h-1zM338 231h1v1h-1zM342 231h1v1h-1zM343 231h1v1h-1zM345 231h1v1h-1zM336 232h1v1h-1zM337 232h1v1h-1zM344 232h1v1h-1zM345 232h1v1h-1zM335 233h1v1h-1zM346 233h1v1h-1zM364 212h1v1h-1zM365 212h1v1h-1zM363 213h1v1h-1zM364 213h1v1h-1zM366 213h1v1h-1zM363 214h1v1h-1zM364 214h1v1h-1zM366 214h1v1h-1zM362 215h1v1h-1zM363 215h1v1h-1zM364 215h1v1h-1zM367 215h1v1h-1zM362 216h1v1h-1zM363 216h1v1h-1zM364 216h1v1h-1zM367 216h1v1h-1zM361 217h1v1h-1zM362 217h1v1h-1zM363 217h1v1h-1zM364 217h1v1h-1zM365 217h1v1h-1zM368 217h1v1h-1zM360 218h1v1h-1zM361 218h1v1h-1zM362 218h1v1h-1zM366 218h1v1h-1zM367 218h1v1h-1zM369 218h1v1h-1zM360 219h1v1h-1zM361 219h1v1h-1zM368 219h1v1h-1zM369 219h1v1h-1zM359 220h1v1h-1zM370 220h1v1h-1zM376 221h1v1h-1zM377 221h1v1h-1zM375 222h1v1h-1zM376 222h1v1h-1zM378 222h1v1h-1zM375 223h1v1h-1zM376 223h1v1h-1zM378 223h1v1h-1zM374 224h1v1h-1zM375 224h1v1h-1zM376 224h1v1h-1zM379 224h1v1h-1zM374 225h1v1h-1zM375 225h1v1h-1zM376 225h1v1h-1zM379 225h1v1h-1zM373 226h1v1h-1zM374 226h1v1h-1zM375 226h1v1h-1zM376 226h1v1h-1zM377 226h1v1h-1zM380 226h1v1h-1zM372 227h1v1h-1zM373 227h1v1h-1zM374 227h1v1h-1zM378 227h1v1h-1zM379 227h1v1h-1zM381 227h1v1h-1zM372 228h1v1h-1zM373 228h1v1h-1zM380 228h1v1h-1zM381 228h1v1h-1zM371 229h1v1h-1zM382 229h1v1h-1zM388 231h1v1h-1zM389 231h1v1h-1zM387 232h1v1h-1zM388 232h1v1h-1zM390 232h1v1h-1zM387 233h1v1h-1zM388 233h1v1h-1zM390 233h1v1h-1zM386 234h1v1h-1zM387 234h1v1h-1zM388 234h1v1h-1zM391 234h1v1h-1zM386 235h1v1h-1zM387 235h1v1h-1zM388 235h1v1h-1zM391 235h1v1h-1zM385 236h1v1h-1zM386 236h1v1h-1zM387 236h1v1h-1zM388 236h1v1h-1zM389 236h1v1h-1zM392 236h1v1h-1zM384 237h1v1h-1zM385 237h1v1h-1zM386 237h1v1h-1zM390 237h1v1h-1zM391 237h1v1h-1zM393 237h1v1h-1zM384 238h1v1h-1zM385 238h1v1h-1zM392 238h1v1h-1zM393 238h1v1h-1zM383 239h1v1h-1zM394 239h1v1h-1zM440 268h1v1h-1zM441 268h1v1h-1zM439 269h1v1h-1zM440 269h1v1h-1zM442 269h1v1h-1zM439 270h1v1h-1zM440 270h1v1h-1zM442 270h1v1h-1zM438 271h1v1h-1zM439 271h1v1h-1zM440 271h1v1h-1zM443 271h1v1h-1zM438 272h1v1h-1zM439 272h1v1h-1zM440 272h1v1h-1zM443 272h1v1h-1zM437 273h1v1h-1zM438 273h1v1h-1zM439 273h1v1h-1zM440 273h1v1h-1zM441 273h1v1h-1zM444 273h1v1h-1zM436 274h1v1h-1zM437 274h1v1h-1zM438 274h1v1h-1zM442 274h1v1h-1zM443 274h1v1h-1zM445 274h1v1h-1zM436 275h1v1h-1zM437 275h1v1h-1zM444 275h1v1h-1zM445 275h1v1h-1zM435 276h1v1h-1zM446 276h1v1h-1zM460 291h1v1h-1zM461 291h1v1h-1zM459 292h1v1h-1zM460 292h1v1h-1zM462 292h1v1h-1zM459 293h1v1h-1zM460 293h1v1h-1zM462 293h1v1h-1zM458 294h1v1h-1zM459 294h1v1h-1zM460 294h1v1h-1zM463 294h1v1h-1zM458 295h1v1h-1zM459 295h1v1h-1zM460 295h1v1h-1zM463 295h1v1h-1zM457 296h1v1h-1zM458 296h1v1h-1zM459 296h1v1h-1zM460 296h1v1h-1zM461 296h1v1h-1zM464 296h1v1h-1zM456 297h1v1h-1zM457 297h1v1h-1zM458 297h1v1h-1zM462 297h1v1h-1zM463 297h1v1h-1zM465 297h1v1h-1zM456 298h1v1h-1zM457 298h1v1h-1zM464 298h1v1h-1zM465 298h1v1h-1zM455 299h1v1h-1zM466 299h1v1h-1zM500 297h1v1h-1zM501 297h1v1h-1zM499 298h1v1h-1zM500 298h1v1h-1zM502 298h1v1h-1zM499 299h1v1h-1zM500 299h1v1h-1zM502 299h1v1h-1zM498 300h1v1h-1zM499 300h1v1h-1zM500 300h1v1h-1zM503 300h1v1h-1zM498 301h1v1h-1zM499 301h1v1h-1zM500 301h1v1h-1zM503 301h1v1h-1zM497 302h1v1h-1zM498 302h1v1h-1zM499 302h1v1h-1zM500 302h1v1h-1zM501 302h1v1h-1zM504 302h1v1h-1zM496 303h1v1h-1zM497 303h1v1h-1zM498 303h1v1h-1zM502 303h1v1h-1zM503 303h1v1h-1zM505 303h1v1h-1zM496 304h1v1h-1zM497 304h1v1h-1zM504 304h1v1h-1zM505 304h1v1h-1zM495 305h1v1h-1zM506 305h1v1h-1zM532 168h1v1h-1zM533 168h1v1h-1zM531 169h1v1h-1zM532 169h1v1h-1zM534 169h1v1h-1zM531 170h1v1h-1zM532 170h1v1h-1zM534 170h1v1h-1zM530 171h1v1h-1zM531 171h1v1h-1zM532 171h1v1h-1zM535 171h1v1h-1zM530 172h1v1h-1zM531 172h1v1h-1zM532 172h1v1h-1zM535 172h1v1h-1zM529 173h1v1h-1zM530 173h1v1h-1zM531 173h1v1h-1zM532 173h1v1h-1zM533 173h1v1h-1zM536 173h1v1h-1zM528 174h1v1h-1zM529 174h1v1h-1zM530 174h1v1h-1zM534 174h1v1h-1zM535 174h1v1h-1zM537 174h1v1h-1zM528 175h1v1h-1zM529 175h1v1h-1zM536 175h1v1h-1zM537 175h1v1h-1zM527 176h1v1h-1zM538 176h1v1h-1zM548 200h1v1h-1zM549 200h1v1h-1zM547 201h1v1h-1zM548 201h1v1h-1zM550 201h1v1h-1zM547 202h1v1h-1zM548 202h1v1h-1zM550 202h1v1h-1zM546 203h1v1h-1zM547 203h1v1h-1zM548 203h1v1h-1zM551 203h1v1h-1zM546 204h1v1h-1zM547 204h1v1h-1zM548 204h1v1h-1zM551 204h1v1h-1zM545 205h1v1h-1zM546 205h1v1h-1zM547 205h1v1h-1zM548 205h1v1h-1zM549 205h1v1h-1zM552 205h1v1h-1zM544 206h1v1h-1zM545 206h1v1h-1zM546 206h1v1h-1zM550 206h1v1h-1zM551 206h1v1h-1zM553 206h1v1h-1zM544 207h1v1h-1zM545 207h1v1h-1zM552 207h1v1h-1zM553 207h1v1h-1zM543 208h1v1h-1zM554 208h1v1h-1zM572 205h1v1h-1zM573 205h1v1h-1zM571 206h1v1h-1zM572 206h1v1h-1zM574 206h1v1h-1zM571 207h1v1h-1zM572 207h1v1h-1zM574 207h1v1h-1zM570 208h1v1h-1zM571 208h1v1h-1zM572 208h1v1h-1zM575 208h1v1h-1zM570 209h1v1h-1zM571 209h1v1h-1zM572 209h1v1h-1zM575 209h1v1h-1zM569 210h1v1h-1zM570 210h1v1h-1zM571 210h1v1h-1zM572 210h1v1h-1zM573 210h1v1h-1zM576 210h1v1h-1zM568 211h1v1h-1zM569 211h1v1h-1zM570 211h1v1h-1zM574 211h1v1h-1zM575 211h1v1h-1zM577 211h1v1h-1zM568 212h1v1h-1zM569 212h1v1h-1zM576 212h1v1h-1zM577 212h1v1h-1zM567 213h1v1h-1zM578 213h1v1h-1zM632 397h1v1h-1zM633 397h1v1h-1zM631 398h1v1h-1zM632 398h1v1h-1zM634 398h1v1h-1zM631 399h1v1h-1zM632 399h1v1h-1zM634 399h1v1h-1zM630 400h1v1h-1zM631 400h1v1h-1zM632 400h1v1h-1zM635 400h1v1h-1zM630 401h1v1h-1zM631 401h1v1h-1zM632 401h1v1h-1zM635 401h1v1h-1zM629 402h1v1h-1zM630 402h1v1h-1zM631 402h1v1h-1zM632 402h1v1h-1zM633 402h1v1h-1zM636 402h1v1h-1zM628 403h1v1h-1zM629 403h1v1h-1zM630 403h1v1h-1zM634 403h1v1h-1zM635 403h1v1h-1zM637 403h1v1h-1zM628 404h1v1h-1zM629 404h1v1h-1zM636 404h1v1h-1zM637 404h1v1h-1zM627 405h1v1h-1zM638 405h1v1h-1zM676 320h1v1h-1zM677 320h1v1h-1zM675 321h1v1h-1zM676 321h1v1h-1zM678 321h1v1h-1zM675 322h1v1h-1zM676 322h1v1h-1zM678 322h1v1h-1zM674 323h1v1h-1zM675 323h1v1h-1zM676 323h1v1h-1zM679 323h1v1h-1zM674 324h1v1h-1zM675 324h1v1h-1zM676 324h1v1h-1zM679 324h1v1h-1zM673 325h1v1h-1zM674 325h1v1h-1zM675 325h1v1h-1zM676 325h1v1h-1zM677 325h1v1h-1zM680 325h1v1h-1zM672 326h1v1h-1zM673 326h1v1h-1zM674 326h1v1h-1zM678 326h1v1h-1zM679 326h1v1h-1zM681 326h1v1h-1zM672 327h1v1h-1zM673 327h1v1h-1zM680 327h1v1h-1zM681 327h1v1h-1zM671 328h1v1h-1zM682 328h1v1h-1zM692 320h1v1h-1zM693 320h1v1h-1zM691 321h1v1h-1zM692 321h1v1h-1zM694 321h1v1h-1zM691 322h1v1h-1zM692 322h1v1h-1zM694 322h1v1h-1zM690 323h1v1h-1zM691 323h1v1h-1zM692 323h1v1h-1zM695 323h1v1h-1zM690 324h1v1h-1zM691 324h1v1h-1zM692 324h1v1h-1zM695 324h1v1h-1zM689 325h1v1h-1zM690 325h1v1h-1zM691 325h1v1h-1zM692 325h1v1h-1zM693 325h1v1h-1zM696 325h1v1h-1zM688 326h1v1h-1zM689 326h1v1h-1zM690 326h1v1h-1zM694 326h1v1h-1zM695 326h1v1h-1zM697 326h1v1h-1zM688 327h1v1h-1zM689 327h1v1h-1zM696 327h1v1h-1zM697 327h1v1h-1zM687 328h1v1h-1zM698 328h1v1h-1zM736 453h1v1h-1zM737 453h1v1h-1zM735 454h1v1h-1zM736 454h1v1h-1zM738 454h1v1h-1zM735 455h1v1h-1zM736 455h1v1h-1zM738 455h1v1h-1zM734 456h1v1h-1zM735 456h1v1h-1zM736 456h1v1h-1zM739 456h1v1h-1zM734 457h1v1h-1zM735 457h1v1h-1zM736 457h1v1h-1zM739 457h1v1h-1zM733 458h1v1h-1zM734 458h1v1h-1zM735 458h1v1h-1zM736 458h1v1h-1zM737 458h1v1h-1zM740 458h1v1h-1zM732 459h1v1h-1zM733 459h1v1h-1zM734 459h1v1h-1zM738 459h1v1h-1zM739 459h1v1h-1zM741 459h1v1h-1zM732 460h1v1h-1zM733 460h1v1h-1zM740 460h1v1h-1zM741 460h1v1h-1zM731 461h1v1h-1zM742 461h1v1h-1zM748 455h1v1h-1zM749 455h1v1h-1zM747 456h1v1h-1zM748 456h1v1h-1zM750 456h1v1h-1zM747 457h1v1h-1zM748 457h1v1h-1zM750 457h1v1h-1zM746 458h1v1h-1zM747 458h1v1h-1zM748 458h1v1h-1zM751 458h1v1h-1zM746 459h1v1h-1zM747 459h1v1h-1zM748 459h1v1h-1zM751 459h1v1h-1zM745 460h1v1h-1zM746 460h1v1h-1zM747 460h1v1h-1zM748 460h1v1h-1zM749 460h1v1h-1zM752 460h1v1h-1zM744 461h1v1h-1zM745 461h1v1h-1zM746 461h1v1h-1zM750 461h1v1h-1zM751 461h1v1h-1zM753 461h1v1h-1zM744 462h1v1h-1zM745 462h1v1h-1zM752 462h1v1h-1zM753 462h1v1h-1zM743 463h1v1h-1zM754 463h1v1h-1zM780 495h1v1h-1zM781 495h1v1h-1zM779 496h1v1h-1zM780 496h1v1h-1zM782 496h1v1h-1zM779 497h1v1h-1zM780 497h1v1h-1zM782 497h1v1h-1zM778 498h1v1h-1zM779 498h1v1h-1zM780 498h1v1h-1zM783 498h1v1h-1zM778 499h1v1h-1zM779 499h1v1h-1zM780 499h1v1h-1zM783 499h1v1h-1zM777 500h1v1h-1zM778 500h1v1h-1zM779 500h1v1h-1zM780 500h1v1h-1zM781 500h1v1h-1zM784 500h1v1h-1zM776 501h1v1h-1zM777 501h1v1h-1zM778 501h1v1h-1zM782 501h1v1h-1zM783 501h1v1h-1zM785 501h1v1h-1zM776 502h1v1h-1zM777 502h1v1h-1zM784 502h1v1h-1zM785 502h1v1h-1zM775 503h1v1h-1zM786 503h1v1h-1zM816 507h1v1h-1zM817 507h1v1h-1zM815 508h1v1h-1zM816 508h1v1h-1zM818 508h1v1h-1zM815 509h1v1h-1zM816 509h1v1h-1zM818 509h1v1h-1zM814 510h1v1h-1zM815 510h1v1h-1zM816 510h1v1h-1zM819 510h1v1h-1zM814 511h1v1h-1zM815 511h1v1h-1zM816 511h1v1h-1zM819 511h1v1h-1zM813 512h1v1h-1zM814 512h1v1h-1zM815 512h1v1h-1zM816 512h1v1h-1zM817 512h1v1h-1zM820 512h1v1h-1zM812 513h1v1h-1zM813 513h1v1h-1zM814 513h1v1h-1zM818 513h1v1h-1zM819 513h1v1h-1zM821 513h1v1h-1zM812 514h1v1h-1zM813 514h1v1h-1zM820 514h1v1h-1zM821 514h1v1h-1zM811 515h1v1h-1zM822 515h1v1h-1zM876 522h1v1h-1zM877 522h1v1h-1zM875 523h1v1h-1zM876 523h1v1h-1zM878 523h1v1h-1zM875 524h1v1h-1zM876 524h1v1h-1zM878 524h1v1h-1zM874 525h1v1h-1zM875 525h1v1h-1zM876 525h1v1h-1zM879 525h1v1h-1zM874 526h1v1h-1zM875 526h1v1h-1zM876 526h1v1h-1zM879 526h1v1h-1zM873 527h1v1h-1zM874 527h1v1h-1zM875 527h1v1h-1zM876 527h1v1h-1zM877 527h1v1h-1zM880 527h1v1h-1zM872 528h1v1h-1zM873 528h1v1h-1zM874 528h1v1h-1zM878 528h1v1h-1zM879 528h1v1h-1zM881 528h1v1h-1zM872 529h1v1h-1zM873 529h1v1h-1zM880 529h1v1h-1zM881 529h1v1h-1zM871 530h1v1h-1zM882 530h1v1h-1zM900 494h1v1h-1zM901 494h1v1h-1zM899 495h1v1h-1zM900 495h1v1h-1zM902 495h1v1h-1zM899 496h1v1h-1zM900 496h1v1h-1zM902 496h1v1h-1zM898 497h1v1h-1zM899 497h1v1h-1zM900 497h1v1h-1zM903 497h1v1h-1zM898 498h1v1h-1zM899 498h1v1h-1zM900 498h1v1h-1zM903 498h1v1h-1zM897 499h1v1h-1zM898 499h1v1h-1zM899 499h1v1h-1zM900 499h1v1h-1zM901 499h1v1h-1zM904 499h1v1h-1zM896 500h1v1h-1zM897 500h1v1h-1zM898 500h1v1h-1zM902 500h1v1h-1zM903 500h1v1h-1zM905 500h1v1h-1zM896 501h1v1h-1zM897 501h1v1h-1zM904 501h1v1h-1zM905 501h1v1h-1zM895 502h1v1h-1zM906 502h1v1h-1zM920 549h1v1h-1zM921 549h1v1h-1zM919 550h1v1h-1zM920 550h1v1h-1zM922 550h1v1h-1zM919 551h1v1h-1zM920 551h1v1h-1zM922 551h1v1h-1zM918 552h1v1h-1zM919 552h1v1h-1zM920 552h1v1h-1zM923 552h1v1h-1zM918 553h1v1h-1zM919 553h1v1h-1zM920 553h1v1h-1zM923 553h1v1h-1zM917 554h1v1h-1zM918 554h1v1h-1zM919 554h1v1h-1zM920 554h1v1h-1zM921 554h1v1h-1zM924 554h1v1h-1zM916 555h1v1h-1zM917 555h1v1h-1zM918 555h1v1h-1zM922 555h1v1h-1zM923 555h1v1h-1zM925 555h1v1h-1zM916 556h1v1h-1zM917 556h1v1h-1zM924 556h1v1h-1zM925 556h1v1h-1zM915 557h1v1h-1zM926 557h1v1h-1zM932 522h1v1h-1zM933 522h1v1h-1zM931 523h1v1h-1zM932 523h1v1h-1zM934 523h1v1h-1zM931 524h1v1h-1zM932 524h1v1h-1zM934 524h1v1h-1zM930 525h1v1h-1zM931 525h1v1h-1zM932 525h1v1h-1zM935 525h1v1h-1zM930 526h1v1h-1zM931 526h1v1h-1zM932 526h1v1h-1zM935 526h1v1h-1zM929 527h1v1h-1zM930 527h1v1h-1zM931 527h1v1h-1zM932 527h1v1h-1zM933 527h1v1h-1zM936 527h1v1h-1zM928 528h1v1h-1zM929 528h1v1h-1zM930 528h1v1h-1zM934 528h1v1h-1zM935 528h1v1h-1zM937 528h1v1h-1zM928 529h1v1h-1zM929 529h1v1h-1zM936 529h1v1h-1zM937 529h1v1h-1zM927 530h1v1h-1zM938 530h1v1h-1zM21 441h1v1h-1zM20 441h1v1h-1zM22 440h1v1h-1zM21 440h1v1h-1zM19 440h1v1h-1zM22 439h1v1h-1zM21 439h1v1h-1zM19 439h1v1h-1zM23 438h1v1h-1zM22 438h1v1h-1zM21 438h1v1h-1zM18 438h1v1h-1zM23 437h1v1h-1zM22 437h1v1h-1zM21 437h1v1h-1zM18 437h1v1h-1zM24 436h1v1h-1zM23 436h1v1h-1zM22 436h1v1h-1zM21 436h1v1h-1zM20 436h1v1h-1zM17 436h1v1h-1zM25 435h1v1h-1zM24 435h1v1h-1zM23 435h1v1h-1zM19 435h1v1h-1zM18 435h1v1h-1zM16 435h1v1h-1zM25 434h1v1h-1zM24 434h1v1h-1zM17 434h1v1h-1zM16 434h1v1h-1zM26 433h1v1h-1zM15 433h1v1h-1zM45 469h1v1h-1zM44 469h1v1h-1zM46 468h1v1h-1zM45 468h1v1h-1zM43 468h1v1h-1zM46 467h1v1h-1zM45 467h1v1h-1zM43 467h1v1h-1zM47 466h1v1h-1zM46 466h1v1h-1zM45 466h1v1h-1zM42 466h1v1h-1zM47 465h1v1h-1zM46 465h1v1h-1zM45 465h1v1h-1zM42 465h1v1h-1zM48 464h1v1h-1zM47 464h1v1h-1zM46 464h1v1h-1zM45 464h1v1h-1zM44 464h1v1h-1zM41 464h1v1h-1zM49 463h1v1h-1zM48 463h1v1h-1zM47 463h1v1h-1zM43 463h1v1h-1zM42 463h1v1h-1zM40 463h1v1h-1zM49 462h1v1h-1zM48 462h1v1h-1zM41 462h1v1h-1zM40 462h1v1h-1zM50 461h1v1h-1zM39 461h1v1h-1zM61 479h1v1h-1zM60 479h1v1h-1zM62 478h1v1h-1zM61 478h1v1h-1zM59 478h1v1h-1zM62 477h1v1h-1zM61 477h1v1h-1zM59 477h1v1h-1zM63 476h1v1h-1zM62 476h1v1h-1zM61 476h1v1h-1zM58 476h1v1h-1zM63 475h1v1h-1zM62 475h1v1h-1zM61 475h1v1h-1zM58 475h1v1h-1zM64 474h1v1h-1zM63 474h1v1h-1zM62 474h1v1h-1zM61 474h1v1h-1zM60 474h1v1h-1zM57 474h1v1h-1zM65 473h1v1h-1zM64 473h1v1h-1zM63 473h1v1h-1zM59 473h1v1h-1zM58 473h1v1h-1zM56 473h1v1h-1zM65 472h1v1h-1zM64 472h1v1h-1zM57 472h1v1h-1zM56 472h1v1h-1zM66 471h1v1h-1zM55 471h1v1h-1zM81 494h1v1h-1zM80 494h1v1h-1zM82 493h1v1h-1zM81 493h1v1h-1zM79 493h1v1h-1zM82 492h1v1h-1zM81 492h1v1h-1zM79 492h1v1h-1zM83 491h1v1h-1zM82 491h1v1h-1zM81 491h1v1h-1zM78 491h1v1h-1zM83 490h1v1h-1zM82 490h1v1h-1zM81 490h1v1h-1zM78 490h1v1h-1zM84 489h1v1h-1zM83 489h1v1h-1zM82 489h1v1h-1zM81 489h1v1h-1zM80 489h1v1h-1zM77 489h1v1h-1zM85 488h1v1h-1zM84 488h1v1h-1zM83 488h1v1h-1zM79 488h1v1h-1zM78 488h1v1h-1zM76 488h1v1h-1zM85 487h1v1h-1zM84 487h1v1h-1zM77 487h1v1h-1zM76 487h1v1h-1zM86 486h1v1h-1zM75 486h1v1h-1zM101 453h1v1h-1zM100 453h1v1h-1zM102 452h1v1h-1zM101 452h1v1h-1zM99 452h1v1h-1zM102 451h1v1h-1zM101 451h1v1h-1zM99 451h1v1h-1zM103 450h1v1h-1zM102 450h1v1h-1zM101 450h1v1h-1zM98 450h1v1h-1zM103 449h1v1h-1zM102 449h1v1h-1zM101 449h1v1h-1zM98 449h1v1h-1zM104 448h1v1h-1zM103 448h1v1h-1zM102 448h1v1h-1zM101 448h1v1h-1zM100 448h1v1h-1zM97 448h1v1h-1zM105 447h1v1h-1zM104 447h1v1h-1zM103 447h1v1h-1zM99 447h1v1h-1zM98 447h1v1h-1zM96 447h1v1h-1zM105 446h1v1h-1zM104 446h1v1h-1zM97 446h1v1h-1zM96 446h1v1h-1zM106 445h1v1h-1zM95 445h1v1h-1zM141 407h1v1h-1zM140 407h1v1h-1zM142 406h1v1h-1zM141 406h1v1h-1zM139 406h1v1h-1zM142 405h1v1h-1zM141 405h1v1h-1zM139 405h1v1h-1zM143 404h1v1h-1zM142 404h1v1h-1zM141 404h1v1h-1zM138 404h1v1h-1zM143 403h1v1h-1zM142 403h1v1h-1zM141 403h1v1h-1zM138 403h1v1h-1zM144 402h1v1h-1zM143 402h1v1h-1zM142 402h1v1h-1zM141 402h1v1h-1zM140 402h1v1h-1zM137 402h1v1h-1zM145 401h1v1h-1zM144 401h1v1h-1zM143 401h1v1h-1zM139 401h1v1h-1zM138 401h1v1h-1zM136 401h1v1h-1zM145 400h1v1h-1zM144 400h1v1h-1zM137 400h1v1h-1zM136 400h1v1h-1zM146 399h1v1h-1zM135 399h1v1h-1zM157 418h1v1h-1zM156 418h1v1h-1zM158 417h1v1h-1zM157 417h1v1h-1zM155 417h1v1h-1zM158 416h1v1h-1zM157 416h1v1h-1zM155 416h1v1h-1zM159 415h1v1h-1zM158 415h1v1h-1zM157 415h1v1h-1zM154 415h1v1h-1zM159 414h1v1h-1zM158 414h1v1h-1zM157 414h1v1h-1zM154 414h1v1h-1zM160 413h1v1h-1zM159 413h1v1h-1zM158 413h1v1h-1zM157 413h1v1h-1zM156 413h1v1h-1zM153 413h1v1h-1zM161 412h1v1h-1zM160 412h1v1h-1zM159 412h1v1h-1zM155 412h1v1h-1zM154 412h1v1h-1zM152 412h1v1h-1zM161 411h1v1h-1zM160 411h1v1h-1zM153 411h1v1h-1zM152 411h1v1h-1zM162 410h1v1h-1zM151 410h1v1h-1zM177 391h1v1h-1zM176 391h1v1h-1zM178 390h1v1h-1zM177 390h1v1h-1zM175 390h1v1h-1zM178 389h1v1h-1zM177 389h1v1h-1zM175 389h1v1h-1zM179 388h1v1h-1zM178 388h1v1h-1zM177 388h1v1h-1zM174 388h1v1h-1zM179 387h1v1h-1zM178 387h1v1h-1zM177 387h1v1h-1zM174 387h1v1h-1zM180 386h1v1h-1zM179 386h1v1h-1zM178 386h1v1h-1zM177 386h1v1h-1zM176 386h1v1h-1zM173 386h1v1h-1zM181 385h1v1h-1zM180 385h1v1h-1zM179 385h1v1h-1zM175 385h1v1h-1zM174 385h1v1h-1zM172 385h1v1h-1zM181 384h1v1h-1zM180 384h1v1h-1zM173 384h1v1h-1zM172 384h1v1h-1zM182 383h1v1h-1zM171 383h1v1h-1zM197 387h1v1h-1zM196 387h1v1h-1zM198 386h1v1h-1zM197 386h1v1h-1zM195 386h1v1h-1zM198 385h1v1h-1zM197 385h1v1h-1zM195 385h1v1h-1zM199 384h1v1h-1zM198 384h1v1h-1zM197 384h1v1h-1zM194 384h1v1h-1zM199 383h1v1h-1zM198 383h1v1h-1zM197 383h1v1h-1zM194 383h1v1h-1zM200 382h1v1h-1zM199 382h1v1h-1zM198 382h1v1h-1zM197 382h1v1h-1zM196 382h1v1h-1zM193 382h1v1h-1zM201 381h1v1h-1zM200 381h1v1h-1zM199 381h1v1h-1zM195 381h1v1h-1zM194 381h1v1h-1zM192 381h1v1h-1zM201 380h1v1h-1zM200 380h1v1h-1zM193 380h1v1h-1zM192 380h1v1h-1zM202 379h1v1h-1zM191 379h1v1h-1zM213 390h1v1h-1zM212 390h1v1h-1zM214 389h1v1h-1zM213 389h1v1h-1zM211 389h1v1h-1zM214 388h1v1h-1zM213 388h1v1h-1zM211 388h1v1h-1zM215 387h1v1h-1zM214 387h1v1h-1zM213 387h1v1h-1zM210 387h1v1h-1zM215 386h1v1h-1zM214 386h1v1h-1zM213 386h1v1h-1zM210 386h1v1h-1zM216 385h1v1h-1zM215 385h1v1h-1zM214 385h1v1h-1zM213 385h1v1h-1zM212 385h1v1h-1zM209 385h1v1h-1zM217 384h1v1h-1zM216 384h1v1h-1zM215 384h1v1h-1zM211 384h1v1h-1zM210 384h1v1h-1zM208 384h1v1h-1zM217 383h1v1h-1zM216 383h1v1h-1zM209 383h1v1h-1zM208 383h1v1h-1zM218 382h1v1h-1zM207 382h1v1h-1zM241 298h1v1h-1zM240 298h1v1h-1zM242 297h1v1h-1zM241 297h1v1h-1zM239 297h1v1h-1zM242 296h1v1h-1zM241 296h1v1h-1zM239 296h1v1h-1zM243 295h1v1h-1zM242 295h1v1h-1zM241 295h1v1h-1zM238 295h1v1h-1zM243 294h1v1h-1zM242 294h1v1h-1zM241 294h1v1h-1zM238 294h1v1h-1zM244 293h1v1h-1zM243 293h1v1h-1zM242 293h1v1h-1zM241 293h1v1h-1zM240 293h1v1h-1zM237 293h1v1h-1zM245 292h1v1h-1zM244 292h1v1h-1zM243 292h1v1h-1zM239 292h1v1h-1zM238 292h1v1h-1zM236 292h1v1h-1zM245 291h1v1h-1zM244 291h1v1h-1zM237 291h1v1h-1zM236 291h1v1h-1zM246 290h1v1h-1zM235 290h1v1h-1zM289 341h1v1h-1zM288 341h1v1h-1zM290 340h1v1h-1zM289 340h1v1h-1zM287 340h1v1h-1zM290 339h1v1h-1zM289 339h1v1h-1zM287 339h1v1h-1zM291 338h1v1h-1zM290 338h1v1h-1zM289 338h1v1h-1zM286 338h1v1h-1zM291 337h1v1h-1zM290 337h1v1h-1zM289 337h1v1h-1zM286 337h1v1h-1zM292 336h1v1h-1zM291 336h1v1h-1zM290 336h1v1h-1zM289 336h1v1h-1zM288 336h1v1h-1zM285 336h1v1h-1zM293 335h1v1h-1zM292 335h1v1h-1zM291 335h1v1h-1zM287 335h1v1h-1zM286 335h1v1h-1zM284 335h1v1h-1zM293 334h1v1h-1zM292 334h1v1h-1zM285 334h1v1h-1zM284 334h1v1h-1zM294 333h1v1h-1zM283 333h1v1h-1zM329 295h1v1h-1zM328 295h1v1h-1zM330 294h1v1h-1zM329 294h1v1h-1zM327 294h1v1h-1zM330 293h1v1h-1zM329 293h1v1h-1zM327 293h1v1h-1zM331 292h1v1h-1zM330 292h1v1h-1zM329 292h1v1h-1zM326 292h1v1h-1zM331 291h1v1h-1zM330 291h1v1h-1zM329 291h1v1h-1zM326 291h1v1h-1zM332 290h1v1h-1zM331 290h1v1h-1zM330 290h1v1h-1zM329 290h1v1h-1zM328 290h1v1h-1zM325 290h1v1h-1zM333 289h1v1h-1zM332 289h1v1h-1zM331 289h1v1h-1zM327 289h1v1h-1zM326 289h1v1h-1zM324 289h1v1h-1zM333 288h1v1h-1zM332 288h1v1h-1zM325 288h1v1h-1zM324 288h1v1h-1zM334 287h1v1h-1zM323 287h1v1h-1zM365 296h1v1h-1zM364 296h1v1h-1zM366 295h1v1h-1zM365 295h1v1h-1zM363 295h1v1h-1zM366 294h1v1h-1zM365 294h1v1h-1zM363 294h1v1h-1zM367 293h1v1h-1zM366 293h1v1h-1zM365 293h1v1h-1zM362 293h1v1h-1zM367 292h1v1h-1zM366 292h1v1h-1zM365 292h1v1h-1zM362 292h1v1h-1zM368 291h1v1h-1zM367 291h1v1h-1zM366 291h1v1h-1zM365 291h1v1h-1zM364 291h1v1h-1zM361 291h1v1h-1zM369 290h1v1h-1zM368 290h1v1h-1zM367 290h1v1h-1zM363 290h1v1h-1zM362 290h1v1h-1zM360 290h1v1h-1zM369 289h1v1h-1zM368 289h1v1h-1zM361 289h1v1h-1zM360 289h1v1h-1zM370 288h1v1h-1zM359 288h1v1h-1zM381 299h1v1h-1zM380 299h1v1h-1zM382 298h1v1h-1zM381 298h1v1h-1zM379 298h1v1h-1zM382 297h1v1h-1zM381 297h1v1h-1zM379 297h1v1h-1zM383 296h1v1h-1zM382 296h1v1h-1zM381 296h1v1h-1zM378 296h1v1h-1zM383 295h1v1h-1zM382 295h1v1h-1zM381 295h1v1h-1zM378 295h1v1h-1zM384 294h1v1h-1zM383 294h1v1h-1zM382 294h1v1h-1zM381 294h1v1h-1zM380 294h1v1h-1zM377 294h1v1h-1zM385 293h1v1h-1zM384 293h1v1h-1zM383 293h1v1h-1zM379 293h1v1h-1zM378 293h1v1h-1zM376 293h1v1h-1zM385 292h1v1h-1zM384 292h1v1h-1zM377 292h1v1h-1zM376 292h1v1h-1zM386 291h1v1h-1zM375 291h1v1h-1zM413 315h1v1h-1zM412 315h1v1h-1zM414 314h1v1h-1zM413 314h1v1h-1zM411 314h1v1h-1zM414 313h1v1h-1zM413 313h1v1h-1zM411 313h1v1h-1zM415 312h1v1h-1zM414 312h1v1h-1zM413 312h1v1h-1zM410 312h1v1h-1zM415 311h1v1h-1zM414 311h1v1h-1zM413 311h1v1h-1zM410 311h1v1h-1zM416 310h1v1h-1zM415 310h1v1h-1zM414 310h1v1h-1zM413 310h1v1h-1zM412 310h1v1h-1zM409 310h1v1h-1zM417 309h1v1h-1zM416 309h1v1h-1zM415 309h1v1h-1zM411 309h1v1h-1zM410 309h1v1h-1zM408 309h1v1h-1zM417 308h1v1h-1zM416 308h1v1h-1zM409 308h1v1h-1zM408 308h1v1h-1zM418 307h1v1h-1zM407 307h1v1h-1zM429 357h1v1h-1zM428 357h1v1h-1zM430 356h1v1h-1zM429 356h1v1h-1zM427 356h1v1h-1zM430 355h1v1h-1zM429 355h1v1h-1zM427 355h1v1h-1zM431 354h1v1h-1zM430 354h1v1h-1zM429 354h1v1h-1zM426 354h1v1h-1zM431 353h1v1h-1zM430 353h1v1h-1zM429 353h1v1h-1zM426 353h1v1h-1zM432 352h1v1h-1zM431 352h1v1h-1zM430 352h1v1h-1zM429 352h1v1h-1zM428 352h1v1h-1zM425 352h1v1h-1zM433 351h1v1h-1zM432 351h1v1h-1zM431 351h1v1h-1zM427 351h1v1h-1zM426 351h1v1h-1zM424 351h1v1h-1zM433 350h1v1h-1zM432 350h1v1h-1zM425 350h1v1h-1zM424 350h1v1h-1zM434 349h1v1h-1zM423 349h1v1h-1zM465 345h1v1h-1zM464 345h1v1h-1zM466 344h1v1h-1zM465 344h1v1h-1zM463 344h1v1h-1zM466 343h1v1h-1zM465 343h1v1h-1zM463 343h1v1h-1zM467 342h1v1h-1zM466 342h1v1h-1zM465 342h1v1h-1zM462 342h1v1h-1zM467 341h1v1h-1zM466 341h1v1h-1zM465 341h1v1h-1zM462 341h1v1h-1zM468 340h1v1h-1zM467 340h1v1h-1zM466 340h1v1h-1zM465 340h1v1h-1zM464 340h1v1h-1zM461 340h1v1h-1zM469 339h1v1h-1zM468 339h1v1h-1zM467 339h1v1h-1zM463 339h1v1h-1zM462 339h1v1h-1zM460 339h1v1h-1zM469 338h1v1h-1zM468 338h1v1h-1zM461 338h1v1h-1zM460 338h1v1h-1zM470 337h1v1h-1zM459 337h1v1h-1zM493 355h1v1h-1zM492 355h1v1h-1zM494 354h1v1h-1zM493 354h1v1h-1zM491 354h1v1h-1zM494 353h1v1h-1zM493 353h1v1h-1zM491 353h1v1h-1zM495 352h1v1h-1zM494 352h1v1h-1zM493 352h1v1h-1zM490 352h1v1h-1zM495 351h1v1h-1zM494 351h1v1h-1zM493 351h1v1h-1zM490 351h1v1h-1zM496 350h1v1h-1zM495 350h1v1h-1zM494 350h1v1h-1zM493 350h1v1h-1zM492 350h1v1h-1zM489 350h1v1h-1zM497 349h1v1h-1zM496 349h1v1h-1zM495 349h1v1h-1zM491 349h1v1h-1zM490 349h1v1h-1zM488 349h1v1h-1zM497 348h1v1h-1zM496 348h1v1h-1zM489 348h1v1h-1zM488 348h1v1h-1zM498 347h1v1h-1zM487 347h1v1h-1zM509 360h1v1h-1zM508 360h1v1h-1zM510 359h1v1h-1zM509 359h1v1h-1zM507 359h1v1h-1zM510 358h1v1h-1zM509 358h1v1h-1zM507 358h1v1h-1zM511 357h1v1h-1zM510 357h1v1h-1zM509 357h1v1h-1zM506 357h1v1h-1zM511 356h1v1h-1zM510 356h1v1h-1zM509 356h1v1h-1zM506 356h1v1h-1zM512 355h1v1h-1zM511 355h1v1h-1zM510 355h1v1h-1zM509 355h1v1h-1zM508 355h1v1h-1zM505 355h1v1h-1zM513 354h1v1h-1zM512 354h1v1h-1zM511 354h1v1h-1zM507 354h1v1h-1zM506 354h1v1h-1zM504 354h1v1h-1zM513 353h1v1h-1zM512 353h1v1h-1zM505 353h1v1h-1zM504 353h1v1h-1zM514 352h1v1h-1zM503 352h1v1h-1zM525 341h1v1h-1zM524 341h1v1h-1zM526 340h1v1h-1zM525 340h1v1h-1zM523 340h1v1h-1zM526 339h1v1h-1zM525 339h1v1h-1zM523 339h1v1h-1zM527 338h1v1h-1zM526 338h1v1h-1zM525 338h1v1h-1zM522 338h1v1h-1zM527 337h1v1h-1zM526 337h1v1h-1zM525 337h1v1h-1zM522 337h1v1h-1zM528 336h1v1h-1zM527 336h1v1h-1zM526 336h1v1h-1zM525 336h1v1h-1zM524 336h1v1h-1zM521 336h1v1h-1zM529 335h1v1h-1zM528 335h1v1h-1zM527 335h1v1h-1zM523 335h1v1h-1zM522 335h1v1h-1zM520 335h1v1h-1zM529 334h1v1h-1zM528 334h1v1h-1zM521 334h1v1h-1zM520 334h1v1h-1zM530 333h1v1h-1zM519 333h1v1h-1zM561 249h1v1h-1zM560 249h1v1h-1zM562 248h1v1h-1zM561 248h1v1h-1zM559 248h1v1h-1zM562 247h1v1h-1zM561 247h1v1h-1zM559 247h1v1h-1zM563 246h1v1h-1zM562 246h1v1h-1zM561 246h1v1h-1zM558 246h1v1h-1zM563 245h1v1h-1zM562 245h1v1h-1zM561 245h1v1h-1zM558 245h1v1h-1zM564 244h1v1h-1zM563 244h1v1h-1zM562 244h1v1h-1zM561 244h1v1h-1zM560 244h1v1h-1zM557 244h1v1h-1zM565 243h1v1h-1zM564 243h1v1h-1zM563 243h1v1h-1zM559 243h1v1h-1zM558 243h1v1h-1zM556 243h1v1h-1zM565 242h1v1h-1zM564 242h1v1h-1zM557 242h1v1h-1zM556 242h1v1h-1zM566 241h1v1h-1zM555 241h1v1h-1zM589 428h1v1h-1zM588 428h1v1h-1zM590 427h1v1h-1zM589 427h1v1h-1zM587 427h1v1h-1zM590 426h1v1h-1zM589 426h1v1h-1zM587 426h1v1h-1zM591 425h1v1h-1zM590 425h1v1h-1zM589 425h1v1h-1zM586 425h1v1h-1zM591 424h1v1h-1zM590 424h1v1h-1zM589 424h1v1h-1zM586 424h1v1h-1zM592 423h1v1h-1zM591 423h1v1h-1zM590 423h1v1h-1zM589 423h1v1h-1zM588 423h1v1h-1zM585 423h1v1h-1zM593 422h1v1h-1zM592 422h1v1h-1zM591 422h1v1h-1zM587 422h1v1h-1zM586 422h1v1h-1zM584 422h1v1h-1zM593 421h1v1h-1zM592 421h1v1h-1zM585 421h1v1h-1zM584 421h1v1h-1zM594 420h1v1h-1zM583 420h1v1h-1zM621 480h1v1h-1zM620 480h1v1h-1zM622 479h1v1h-1zM621 479h1v1h-1zM619 479h1v1h-1zM622 478h1v1h-1zM621 478h1v1h-1zM619 478h1v1h-1zM623 477h1v1h-1zM622 477h1v1h-1zM621 477h1v1h-1zM618 477h1v1h-1zM623 476h1v1h-1zM622 476h1v1h-1zM621 476h1v1h-1zM618 476h1v1h-1zM624 475h1v1h-1zM623 475h1v1h-1zM622 475h1v1h-1zM621 475h1v1h-1zM620 475h1v1h-1zM617 475h1v1h-1zM625 474h1v1h-1zM624 474h1v1h-1zM623 474h1v1h-1zM619 474h1v1h-1zM618 474h1v1h-1zM616 474h1v1h-1zM625 473h1v1h-1zM624 473h1v1h-1zM617 473h1v1h-1zM616 473h1v1h-1zM626 472h1v1h-1zM615 472h1v1h-1zM645 452h1v1h-1zM644 452h1v1h-1zM646 451h1v1h-1zM645 451h1v1h-1zM643 451h1v1h-1zM646 450h1v1h-1zM645 450h1v1h-1zM643 450h1v1h-1zM647 449h1v1h-1zM646 449h1v1h-1zM645 449h1v1h-1zM642 449h1v1h-1zM647 448h1v1h-1zM646 448h1v1h-1zM645 448h1v1h-1zM642 448h1v1h-1zM648 447h1v1h-1zM647 447h1v1h-1zM646 447h1v1h-1zM645 447h1v1h-1zM644 447h1v1h-1zM641 447h1v1h-1zM649 446h1v1h-1zM648 446h1v1h-1zM647 446h1v1h-1zM643 446h1v1h-1zM642 446h1v1h-1zM640 446h1v1h-1zM649 445h1v1h-1zM648 445h1v1h-1zM641 445h1v1h-1zM640 445h1v1h-1zM650 444h1v1h-1zM639 444h1v1h-1zM705 489h1v1h-1zM704 489h1v1h-1zM706 488h1v1h-1zM705 488h1v1h-1zM703 488h1v1h-1zM706 487h1v1h-1zM705 487h1v1h-1zM703 487h1v1h-1zM707 486h1v1h-1zM706 486h1v1h-1zM705 486h1v1h-1zM702 486h1v1h-1zM707 485h1v1h-1zM706 485h1v1h-1zM705 485h1v1h-1zM702 485h1v1h-1zM708 484h1v1h-1zM707 484h1v1h-1zM706 484h1v1h-1zM705 484h1v1h-1zM704 484h1v1h-1zM701 484h1v1h-1zM709 483h1v1h-1zM708 483h1v1h-1zM707 483h1v1h-1zM703 483h1v1h-1zM702 483h1v1h-1zM700 483h1v1h-1zM709 482h1v1h-1zM708 482h1v1h-1zM701 482h1v1h-1zM700 482h1v1h-1zM710 481h1v1h-1zM699 481h1v1h-1zM725 538h1v1h-1zM724 538h1v1h-1zM726 537h1v1h-1zM725 537h1v1h-1zM723 537h1v1h-1zM726 536h1v1h-1zM725 536h1v1h-1zM723 536h1v1h-1zM727 535h1v1h-1zM726 535h1v1h-1zM725 535h1v1h-1zM722 535h1v1h-1zM727 534h1v1h-1zM726 534h1v1h-1zM725 534h1v1h-1zM722 534h1v1h-1zM728 533h1v1h-1zM727 533h1v1h-1zM726 533h1v1h-1zM725 533h1v1h-1zM724 533h1v1h-1zM721 533h1v1h-1zM729 532h1v1h-1zM728 532h1v1h-1zM727 532h1v1h-1zM723 532h1v1h-1zM722 532h1v1h-1zM720 532h1v1h-1zM729 531h1v1h-1zM728 531h1v1h-1zM721 531h1v1h-1zM720 531h1v1h-1zM730 530h1v1h-1zM719 530h1v1h-1zM765 572h1v1h-1zM764 572h1v1h-1zM766 571h1v1h-1zM765 571h1v1h-1zM763 571h1v1h-1zM766 570h1v1h-1zM765 570h1v1h-1zM763 570h1v1h-1zM767 569h1v1h-1zM766 569h1v1h-1zM765 569h1v1h-1zM762 569h1v1h-1zM767 568h1v1h-1zM766 568h1v1h-1zM765 568h1v1h-1zM762 568h1v1h-1zM768 567h1v1h-1zM767 567h1v1h-1zM766 567h1v1h-1zM765 567h1v1h-1zM764 567h1v1h-1zM761 567h1v1h-1zM769 566h1v1h-1zM768 566h1v1h-1zM767 566h1v1h-1zM763 566h1v1h-1zM762 566h1v1h-1zM760 566h1v1h-1zM769 565h1v1h-1zM768 565h1v1h-1zM761 565h1v1h-1zM760 565h1v1h-1zM770 564h1v1h-1zM759 564h1v1h-1zM805 586h1v1h-1zM804 586h1v1h-1zM806 585h1v1h-1zM805 585h1v1h-1zM803 585h1v1h-1zM806 584h1v1h-1zM805 584h1v1h-1zM803 584h1v1h-1zM807 583h1v1h-1zM806 583h1v1h-1zM805 583h1v1h-1zM802 583h1v1h-1zM807 582h1v1h-1zM806 582h1v1h-1zM805 582h1v1h-1zM802 582h1v1h-1zM808 581h1v1h-1zM807 581h1v1h-1zM806 581h1v1h-1zM805 581h1v1h-1zM804 581h1v1h-1zM801 581h1v1h-1zM809 580h1v1h-1zM808 580h1v1h-1zM807 580h1v1h-1zM803 580h1v1h-1zM802 580h1v1h-1zM800 580h1v1h-1zM809 579h1v1h-1zM808 579h1v1h-1zM801 579h1v1h-1zM800 579h1v1h-1zM810 578h1v1h-1zM799 578h1v1h-1zM829 609h1v1h-1zM828 609h1v1h-1zM830 608h1v1h-1zM829 608h1v1h-1zM827 608h1v1h-1zM830 607h1v1h-1zM829 607h1v1h-1zM827 607h1v1h-1zM831 606h1v1h-1zM830 606h1v1h-1zM829 606h1v1h-1zM826 606h1v1h-1zM831 605h1v1h-1zM830 605h1v1h-1zM829 605h1v1h-1zM826 605h1v1h-1zM832 604h1v1h-1zM831 604h1v1h-1zM830 604h1v1h-1zM829 604h1v1h-1zM828 604h1v1h-1zM825 604h1v1h-1zM833 603h1v1h-1zM832 603h1v1h-1zM831 603h1v1h-1zM827 603h1v1h-1zM826 603h1v1h-1zM824 603h1v1h-1zM833 602h1v1h-1zM832 602h1v1h-1zM825 602h1v1h-1zM824 602h1v1h-1zM834 601h1v1h-1zM823 601h1v1h-1zM845 610h1v1h-1zM844 610h1v1h-1zM846 609h1v1h-1zM845 609h1v1h-1zM843 609h1v1h-1zM846 608h1v1h-1zM845 608h1v1h-1zM843 608h1v1h-1zM847 607h1v1h-1zM846 607h1v1h-1zM845 607h1v1h-1zM842 607h1v1h-1zM847 606h1v1h-1zM846 606h1v1h-1zM845 606h1v1h-1zM842 606h1v1h-1zM848 605h1v1h-1zM847 605h1v1h-1zM846 605h1v1h-1zM845 605h1v1h-1zM844 605h1v1h-1zM841 605h1v1h-1zM849 604h1v1h-1zM848 604h1v1h-1zM847 604h1v1h-1zM843 604h1v1h-1zM842 604h1v1h-1zM840 604h1v1h-1zM849 603h1v1h-1zM848 603h1v1h-1zM841 603h1v1h-1zM840 603h1v1h-1zM850 602h1v1h-1zM839 602h1v1h-1zM857 600h1v1h-1zM856 600h1v1h-1zM858 599h1v1h-1zM857 599h1v1h-1zM855 599h1v1h-1zM858 598h1v1h-1zM857 598h1v1h-1zM855 598h1v1h-1zM859 597h1v1h-1zM858 597h1v1h-1zM857 597h1v1h-1zM854 597h1v1h-1zM859 596h1v1h-1zM858 596h1v1h-1zM857 596h1v1h-1zM854 596h1v1h-1zM860 595h1v1h-1zM859 595h1v1h-1zM858 595h1v1h-1zM857 595h1v1h-1zM856 595h1v1h-1zM853 595h1v1h-1zM861 594h1v1h-1zM860 594h1v1h-1zM859 594h1v1h-1zM855 594h1v1h-1zM854 594h1v1h-1zM852 594h1v1h-1zM861 593h1v1h-1zM860 593h1v1h-1zM853 593h1v1h-1zM852 593h1v1h-1zM862 592h1v1h-1zM851 592h1v1h-1zM889 576h1v1h-1zM888 576h1v1h-1zM890 575h1v1h-1zM889 575h1v1h-1zM887 575h1v1h-1zM890 574h1v1h-1zM889 574h1v1h-1zM887 574h1v1h-1zM891 573h1v1h-1zM890 573h1v1h-1zM889 573h1v1h-1zM886 573h1v1h-1zM891 572h1v1h-1zM890 572h1v1h-1zM889 572h1v1h-1zM886 572h1v1h-1zM892 571h1v1h-1zM891 571h1v1h-1zM890 571h1v1h-1zM889 571h1v1h-1zM888 571h1v1h-1zM885 571h1v1h-1zM893 570h1v1h-1zM892 570h1v1h-1zM891 570h1v1h-1zM887 570h1v1h-1zM886 570h1v1h-1zM884 570h1v1h-1zM893 569h1v1h-1zM892 569h1v1h-1zM885 569h1v1h-1zM884 569h1v1h-1zM894 568h1v1h-1zM883 568h1v1h-1zM913 613h1v1h-1zM912 613h1v1h-1zM914 612h1v1h-1zM913 612h1v1h-1zM911 612h1v1h-1zM914 611h1v1h-1zM913 611h1v1h-1zM911 611h1v1h-1zM915 610h1v1h-1zM914 610h1v1h-1zM913 610h1v1h-1zM910 610h1v1h-1zM915 609h1v1h-1zM914 609h1v1h-1zM913 609h1v1h-1zM910 609h1v1h-1zM916 608h1v1h-1zM915 608h1v1h-1zM914 608h1v1h-1zM913 608h1v1h-1zM912 608h1v1h-1zM909 608h1v1h-1zM917 607h1v1h-1zM916 607h1v1h-1zM915 607h1v1h-1zM911 607h1v1h-1zM910 607h1v1h-1zM908 607h1v1h-1zM917 606h1v1h-1zM916 606h1v1h-1zM909 606h1v1h-1zM908 606h1v1h-1zM918 605h1v1h-1zM907 605h1v1h-1zM969 634h1v1h-1zM968 634h1v1h-1zM970 633h1v1h-1zM969 633h1v1h-1zM967 633h1v1h-1zM970 632h1v1h-1zM969 632h1v1h-1zM967 632h1v1h-1zM971 631h1v1h-1zM970 631h1v1h-1zM969 631h1v1h-1zM966 631h1v1h-1zM971 630h1v1h-1zM970 630h1v1h-1zM969 630h1v1h-1zM966 630h1v1h-1zM972 629h1v1h-1zM971 629h1v1h-1zM970 629h1v1h-1zM969 629h1v1h-1zM968 629h1v1h-1zM965 629h1v1h-1zM973 628h1v1h-1zM972 628h1v1h-1zM971 628h1v1h-1zM967 628h1v1h-1zM966 628h1v1h-1zM964 628h1v1h-1zM973 627h1v1h-1zM972 627h1v1h-1zM965 627h1v1h-1zM964 627h1v1h-1zM974 626h1v1h-1zM963 626h1v1h-1z" fill="#DC143C"/><path d="M9,455C11.17,454.00 18.00,451.17 22,449C26.00,446.83 29.33,443.75 33,442C36.67,440.25 40.17,439.50 44,438.5C47.83,437.50 52.83,436.67 56,436C59.17,435.33 60.50,434.58 63,434.5C65.50,434.42 67.00,435.25 71,435.5C75.00,435.75 82.67,436.08 87,436C91.33,435.92 93.25,435.43 97,435C100.75,434.57 105.83,435.00 109.5,433.4C113.17,431.80 115.42,428.47 119,425.4C122.58,422.33 126.00,420.07 131,415C136.00,409.93 145.25,398.33 149,395C152.75,391.67 151.17,395.92 153.5,395C155.83,394.08 159.42,392.33 163,389.5C166.58,386.67 170.60,381.67 175,378C179.40,374.33 185.40,369.25 189.4,367.5C193.40,365.75 195.07,368.25 199,367.5C202.93,366.75 209.00,365.08 213,363C217.00,360.92 219.33,359.42 223,355C226.67,350.58 230.87,343.17 235,336.5C239.13,329.83 243.63,321.47 247.8,315C251.97,308.53 256.13,303.25 260,297.7C263.87,292.15 266.50,286.03 271,281.7C275.50,277.37 282.45,273.10 287,271.7C291.55,270.30 295.35,272.37 298.3,273.3C301.25,274.23 302.32,276.12 304.7,277.3C307.08,278.48 308.88,279.07 312.6,280.4C316.32,281.73 323.27,284.08 327,285.3C330.73,286.52 332.33,287.70 335,287.7C337.67,287.70 340.20,286.80 343,285.3C345.80,283.80 348.98,280.35 351.8,278.7C354.62,277.05 356.70,277.28 359.9,275.4C363.10,273.52 367.82,269.67 371,267.4C374.18,265.13 376.20,262.92 379,261.8C381.80,260.68 383.52,261.00 387.8,260.7C392.08,260.40 400.17,258.78 404.7,260C409.23,261.22 411.82,266.33 415,268C418.18,269.67 420.18,267.83 423.8,270C427.42,272.17 432.17,277.42 436.7,281C441.23,284.58 447.68,289.50 451,291.5C454.32,293.50 453.78,291.00 456.6,293C459.42,295.00 464.17,300.27 467.9,303.5C471.63,306.73 475.82,310.25 479,312.4C482.18,314.55 484.73,315.10 487,316.4C489.27,317.70 490.32,319.70 492.6,320.2C494.88,320.70 497.75,319.13 500.7,319.4C503.65,319.67 506.92,321.25 510.3,321.8C513.68,322.35 517.80,323.97 521,322.7C524.20,321.43 526.50,317.98 529.5,314.2C532.50,310.42 535.42,305.28 539,300C542.58,294.72 547.40,287.43 551,282.5C554.60,277.57 557.12,274.82 560.6,270.4C564.08,265.98 568.28,259.87 571.9,256C575.52,252.13 579.12,247.87 582.3,247.2C585.48,246.53 587.13,245.70 591,252C594.87,258.30 600.17,270.67 605.5,285C610.83,299.33 618.08,324.67 623,338C627.92,351.33 631.40,356.23 635,365C638.60,373.77 641.12,382.43 644.6,390.6C648.08,398.77 653.00,410.02 655.9,414C658.80,417.98 659.87,414.42 662,414.5C664.13,414.58 666.53,415.25 668.7,414.5C670.87,413.75 672.62,411.50 675,410C677.38,408.50 680.50,407.50 683,405.5C685.50,403.50 687.90,400.00 690,398C692.10,396.00 693.43,394.00 695.6,393.5C697.77,393.00 700.02,393.43 703,395C705.98,396.57 709.33,399.62 713.5,402.9C717.67,406.18 723.08,409.85 728,414.7C732.92,419.55 738.07,424.65 743,432C747.93,439.35 753.77,450.47 757.6,458.8C761.43,467.13 762.60,476.13 766,482C769.40,487.87 773.57,490.02 778,494C782.43,497.98 788.15,501.97 792.6,505.9C797.05,509.83 801.08,514.33 804.7,517.6C808.32,520.87 810.58,521.77 814.3,525.5C818.02,529.23 823.95,536.63 827,540C830.05,543.37 829.52,542.87 832.6,545.7C835.68,548.53 841.77,554.07 845.5,557C849.23,559.93 852.08,561.72 855,563.3C857.92,564.88 859.67,566.05 863,566.5C866.33,566.95 871.92,566.47 875,566C878.08,565.53 879.08,563.53 881.5,563.7C883.92,563.87 886.58,568.08 889.5,567C892.42,565.92 896.48,559.33 899,557.2C901.52,555.07 901.78,554.70 904.6,554.2C907.42,553.70 912.17,554.47 915.9,554.2C919.63,553.93 923.82,552.87 927,552.6C930.18,552.33 932.00,552.10 935,552.6C938.00,553.10 941.72,554.70 945,555.6C948.28,556.50 951.75,556.80 954.7,558C957.65,559.20 960.32,560.93 962.7,562.8C965.08,564.67 967.28,567.38 969,569.2C970.72,571.02 971.25,572.15 973,573.7C974.75,575.25 977.33,577.57 979.5,578.5C981.67,579.43 984.92,579.17 986,579.3" fill="none" stroke="#0000FF" stroke-width="3" stroke-linejoin="round" stroke-linecap="round" shape-rendering="geometricPrecision"/><polyline points="9.5,394.5 81.5,482.5 245.5,210.5 289.5,328.5 341.5,239.5 509.5,347.5 533.5,182.5 621.5,468.5 677.5,334.5 845.5,598.5 901.5,508.5 969.5,622.5" fill="none" stroke="#FF0000" stroke-width="2" stroke-linejoin="miter"/><rect x="9" y="554" width="1231" height="2" fill="#FF0000"/><path d="M1037 559h3v5l-1 12h-1l-1-12zM1037 579h3v3h-3zM1048 559h3v5l-1 12h-1l-1-12zM1048 579h3v3h-3zM1059 559h3v5l-1 12h-1l-1-12zM1059 579h3v3h-3zM1070 559h3v5l-1 12h-1l-1-12zM1070 579h3v3h-3zM1081 559h3v5l-1 12h-1l-1-12zM1081 579h3v3h-3z" fill="#FF0000" shape-rendering="geometricPrecision"/><path d="M988 110h10l-5 5z" fill="#778899"/></g><rect x="8.5" y="109.5" width="1232" height="574" fill="none" stroke="#000" stroke-width="1"/><text x="1246" y="121.5" textLength="32" lengthAdjust="spacingAndGlyphs" style="font-family:'Liberation Sans', sans-serif;font-size:9.6px;">0.85835</text><text x="1246" y="154.5" textLength="32" lengthAdjust="spacingAndGlyphs" style="font-family:'Liberation Sans', sans-serif;font-size:9.6px;">0.85620</text><text x="1246" y="187.5" textLength="32" lengthAdjust="spacingAndGlyphs" style="font-family:'Liberation Sans', sans-serif;font-size:9.6px;">0.85405</text><text x="1246" y="220.5" textLength="32" lengthAdjust="spacingAndGlyphs" style="font-family:'Liberation Sans', sans-serif;font-size:9.6px;">0.85190</text><text x="1246" y="253.5" textLength="32" lengthAdjust="spacingAndGlyphs" style="font-family:'Liberation Sans', sans-serif;font-size:9.6px;">0.84980</text><text x="1246" y="286.5" textLength="32" lengthAdjust="spacingAndGlyphs" style="font-family:'Liberation Sans', sans-serif;font-size:9.6px;">0.84765</text><text x="1246" y="319.5" textLength="32" lengthAdjust="spacingAndGlyphs" style="font-family:'Liberation Sans', sans-serif;font-size:9.6px;">0.84550</text><text x="1246" y="352.5" textLength="32" lengthAdjust="spacingAndGlyphs" style="font-family:'Liberation Sans', sans-serif;font-size:9.6px;">0.84335</text><text x="1246" y="385.5" textLength="32" lengthAdjust="spacingAndGlyphs" style="font-family:'Liberation Sans', sans-serif;font-size:9.6px;">0.84120</text><text x="1246" y="418.5" textLength="32" lengthAdjust="spacingAndGlyphs" style="font-family:'Liberation Sans', sans-serif;font-size:9.6px;">0.83910</text><text x="1246" y="451.5" textLength="32" lengthAdjust="spacingAndGlyphs" style="font-family:'Liberation Sans', sans-serif;font-size:9.6px;">0.83695</text><text x="1246" y="484.5" textLength="32" lengthAdjust="spacingAndGlyphs" style="font-family:'Liberation Sans', sans-serif;font-size:9.6px;">0.83480</text><text x="1246" y="517.5" textLength="32" lengthAdjust="spacingAndGlyphs" style="font-family:'Liberation Sans', sans-serif;font-size:9.6px;">0.83265</text><text x="1246" y="550.5" textLength="32" lengthAdjust="spacingAndGlyphs" style="font-family:'Liberation Sans', sans-serif;font-size:9.6px;">0.83050</text><text x="1246" y="583.5" textLength="32" lengthAdjust="spacingAndGlyphs" style="font-family:'Liberation Sans', sans-serif;font-size:9.6px;">0.82840</text><text x="1246" y="616.5" textLength="32" lengthAdjust="spacingAndGlyphs" style="font-family:'Liberation Sans', sans-serif;font-size:9.6px;">0.82625</text><text x="1246" y="649.5" textLength="32" lengthAdjust="spacingAndGlyphs" style="font-family:'Liberation Sans', sans-serif;font-size:9.6px;">0.82410</text><text x="1246" y="682.5" textLength="32" lengthAdjust="spacingAndGlyphs" style="font-family:'Liberation Sans', sans-serif;font-size:9.6px;">0.82195</text><path d="M1241 119h3v1h-3zM1241 152h3v1h-3zM1241 185h3v1h-3zM1241 218h3v1h-3zM1241 251h3v1h-3zM1241 284h3v1h-3zM1241 317h3v1h-3zM1241 350h3v1h-3zM1241 383h3v1h-3zM1241 416h3v1h-3zM1241 449h3v1h-3zM1241 482h3v1h-3zM1241 515h3v1h-3zM1241 548h3v1h-3zM1241 581h3v1h-3zM1241 614h3v1h-3zM1241 647h3v1h-3zM1241 680h3v1h-3z" fill="#000"/><rect x="1243" y="549" width="39" height="11" fill="#FF0000"/><text x="1246" y="557.5" textLength="32" lengthAdjust="spacingAndGlyphs" style="font-family:'Liberation Sans', sans-serif;font-size:9.6px;" fill="#fff">0.83009</text><rect x="1243" y="587" width="39" height="11" fill="#000"/><text x="1246" y="595.5" textLength="32" lengthAdjust="spacingAndGlyphs" style="font-family:'Liberation Sans', sans-serif;font-size:9.6px;" fill="#fff">0.82758</text><text x="8" y="696" textLength="49" lengthAdjust="spacingAndGlyphs" style="font-family:'Liberation Sans', sans-serif;font-size:10px;">15 Oct 2013</text><text x="72" y="696" textLength="53" lengthAdjust="spacingAndGlyphs" style="font-family:'Liberation Sans', sans-serif;font-size:10px;">15 Oct 22:00</text><text x="136" y="696" textLength="53" lengthAdjust="spacingAndGlyphs" style="font-family:'Liberation Sans', sans-serif;font-size:10px;">16 Oct 14:00</text><text x="200" y="696" textLength="53" lengthAdjust="spacingAndGlyphs" style="font-family:'Liberation Sans', sans-serif;font-size:10px;">17 Oct 06:00</text><text x="264" y="696" textLength="53" lengthAdjust="spacingAndGlyphs" style="font-family:'Liberation Sans', sans-serif;font-size:10px;">17 Oct 22:00</text><text x="328" y="696" textLength="53" lengthAdjust="spacingAndGlyphs" style="font-family:'Liberation Sans', sans-serif;font-size:10px;">18 Oct 14:00</text><text x="392" y="696" textLength="53" lengthAdjust="spacingAndGlyphs" style="font-family:'Liberation Sans', sans-serif;font-size:10px;">21 Oct 06:00</text><text x="456" y="696" textLength="53" lengthAdjust="spacingAndGlyphs" style="font-family:'Liberation Sans', sans-serif;font-size:10px;">21 Oct 22:00</text><text x="520" y="696" textLength="53" lengthAdjust="spacingAndGlyphs" style="font-family:'Liberation Sans', sans-serif;font-size:10px;">22 Oct 14:00</text><text x="584" y="696" textLength="53" lengthAdjust="spacingAndGlyphs" style="font-family:'Liberation Sans', sans-serif;font-size:10px;">23 Oct 06:00</text><text x="648" y="696" textLength="53" lengthAdjust="spacingAndGlyphs" style="font-family:'Liberation Sans', sans-serif;font-size:10px;">23 Oct 22:00</text><text x="712" y="696" textLength="53" lengthAdjust="spacingAndGlyphs" style="font-family:'Liberation Sans', sans-serif;font-size:10px;">24 Oct 14:00</text><text x="776" y="696" textLength="53" lengthAdjust="spacingAndGlyphs" style="font-family:'Liberation Sans', sans-serif;font-size:10px;">25 Oct 06:00</text><text x="840" y="696" textLength="53" lengthAdjust="spacingAndGlyphs" style="font-family:'Liberation Sans', sans-serif;font-size:10px;">25 Oct 22:00</text><text x="904" y="696" textLength="53" lengthAdjust="spacingAndGlyphs" style="font-family:'Liberation Sans', sans-serif;font-size:10px;">28 Oct 13:00</text><text x="968" y="696" textLength="53" lengthAdjust="spacingAndGlyphs" style="font-family:'Liberation Sans', sans-serif;font-size:10px;">29 Oct 05:00</text><path d="M9 684h1v3h-1zM73 684h1v3h-1zM137 684h1v3h-1zM201 684h1v3h-1zM265 684h1v3h-1zM329 684h1v3h-1zM393 684h1v3h-1zM457 684h1v3h-1zM521 684h1v3h-1zM585 684h1v3h-1zM649 684h1v3h-1zM713 684h1v3h-1zM777 684h1v3h-1zM841 684h1v3h-1zM905 684h1v3h-1zM969 684h1v3h-1z" fill="#000"/><rect x="22" y="112" width="204" height="11" fill="#fff"/><path d="M12 116h7l-3.5 3.5z" fill="#000" shape-rendering="geometricPrecision"/><text x="23" y="121" textLength="55" lengthAdjust="spacingAndGlyphs" style="font-family:'Liberation Sans', sans-serif;font-size:9.6px;">NZDUSD,H1</text><text x="84" y="121" textLength="140" lengthAdjust="spacingAndGlyphs" style="font-family:'Liberation Sans', sans-serif;font-size:9.6px;">0.82795 0.82796 0.82756 0.82758</text><rect x="14" y="539" width="79" height="10" fill="#fff"/><text x="15" y="548" textLength="76" lengthAdjust="spacingAndGlyphs" style="font-family:'Liberation Sans', sans-serif;font-size:9.6px;">#667628 buy 0.20</text>
</svg>
</body></html>
